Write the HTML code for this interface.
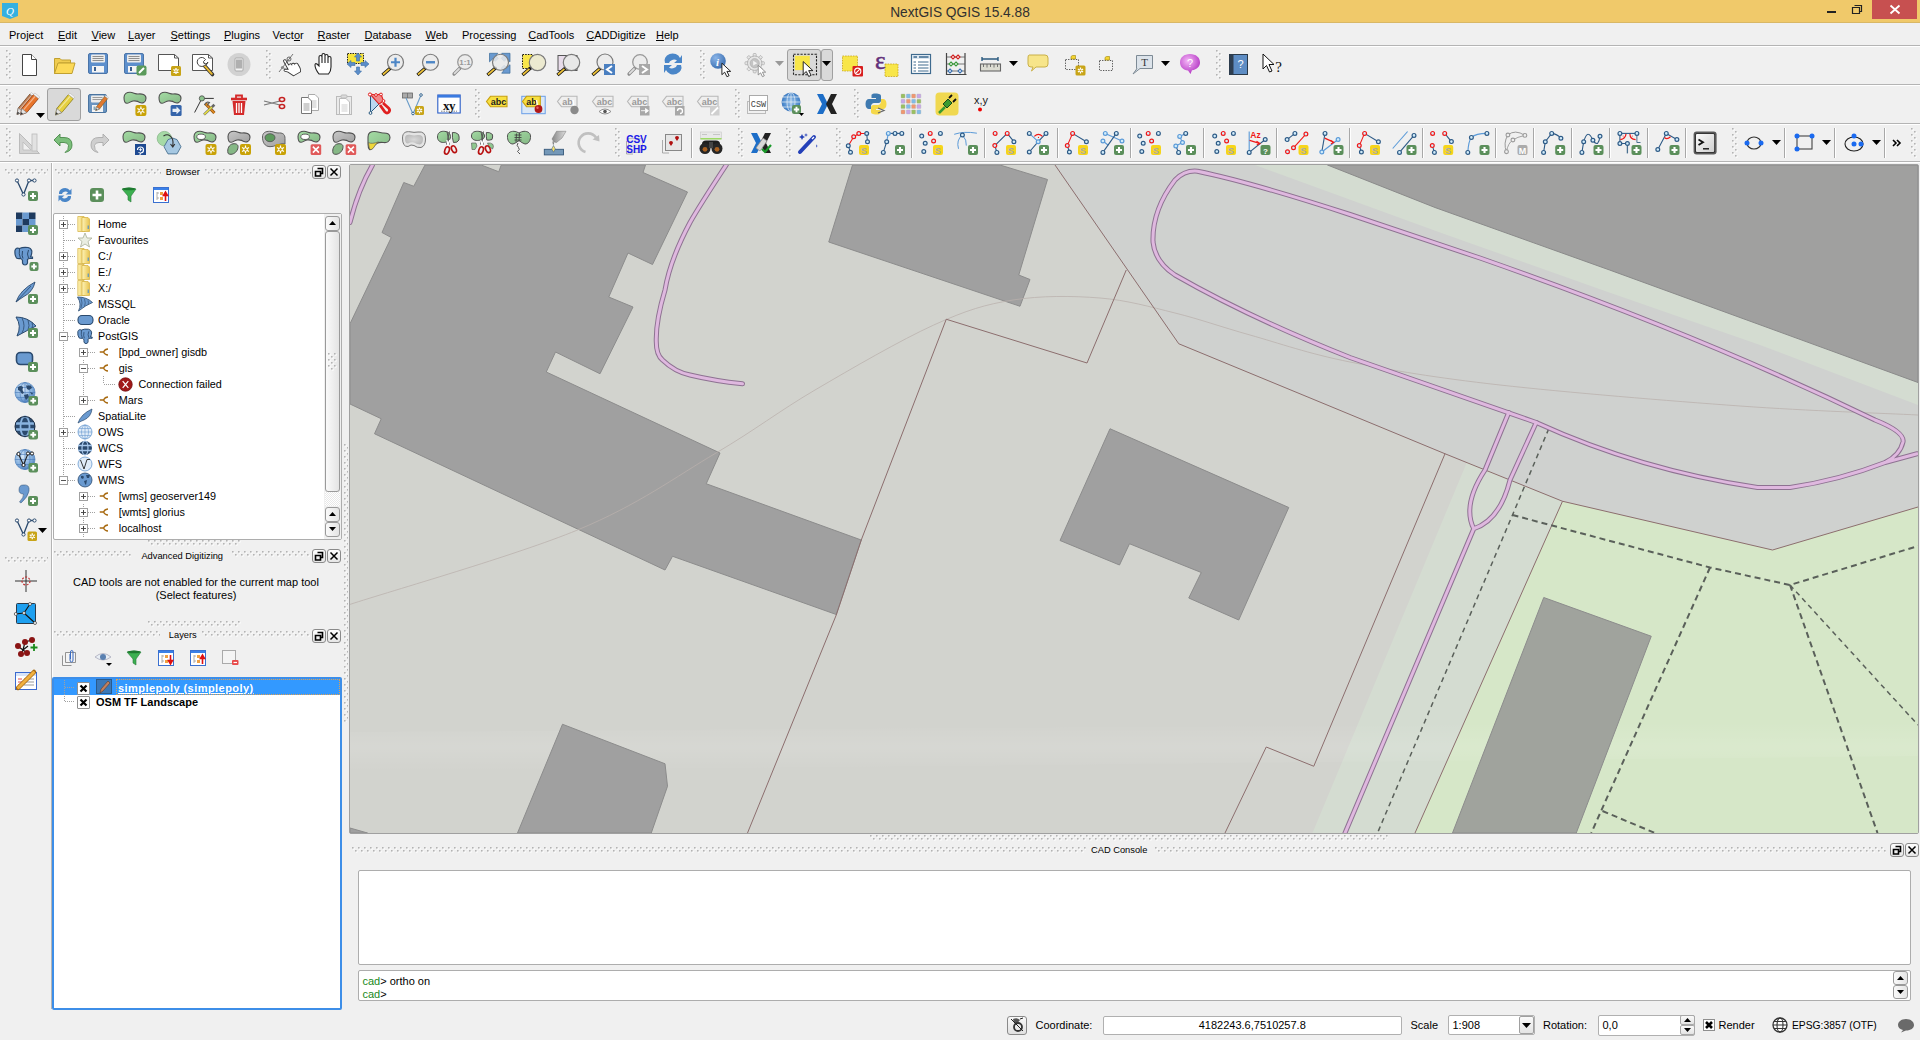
<!DOCTYPE html>
<html><head><meta charset="utf-8"><title>NextGIS QGIS</title>
<style>
*{margin:0;padding:0;box-sizing:border-box}
html,body{width:1920px;height:1040px;overflow:hidden;background:#f0f0f0;font-family:"Liberation Sans",sans-serif;font-size:12px;color:#000;position:relative}
.a{position:absolute}
.t{position:absolute;white-space:nowrap;line-height:1}
.hl{position:absolute;height:1px;background:#a0a0a0}
.vl{position:absolute;width:1px;background:#a0a0a0}
.box{position:absolute;background:#fff;border:1px solid #abadb3}
.dbtn{position:absolute;width:14px;height:14px;border:1px solid #8a8a8a;border-radius:3px;background:linear-gradient(#fdfdfd,#e6e6e6)}
u{text-decoration:underline}
svg{overflow:visible}

</style></head><body>
<div class="a" style="left:349px;top:164px;width:1570px;height:670px;border:1px solid #a0a0a0;border-radius:2px;background:#d2d3ce"></div>

<svg class="map" style="position:absolute;left:350px;top:165px;overflow:hidden" width="1568" height="668" viewBox="350 165 1568 668">
<rect x="350" y="165" width="1568" height="668" fill="#d2d3ce"/>
<!-- cool grey region -->
<polygon points="1055,165 1178.75,343.75 1315,400 1445,453.75 1562.5,501.25 1772.5,550 1918,507 1918,165" fill="#cfd1cf"/>
<!-- pale green strip -->
<polygon points="1467,462 1562.5,501.25 1415,833 1312.5,833" fill="#d4dcd1"/>
<!-- bright green -->
<polygon points="1562.5,501.25 1772.5,550 1918,507 1918,833 1415,833" fill="#d6e7c8"/>
<!-- green band -->
<path d="M1255,165 L1440,232.5 L1600,289.2 L1760,345 L1918,405 L1918,165 Z" fill="#d4dcd1"/>
<!-- top-right building -->
<path d="M1327.5,165 L1435,207.5 L1609.6,270 L1760,324.8 L1918,382.5 L1918,165 Z" fill="#a0a09f" stroke="#8a8a8a" stroke-width="1"/>

<defs><linearGradient id="hb" x1="0" y1="0" x2="0" y2="1"><stop offset="0" stop-color="#fff" stop-opacity="0"/><stop offset=".5" stop-color="#fff" stop-opacity=".10"/><stop offset="1" stop-color="#fff" stop-opacity="0"/></linearGradient></defs><path d="M350,732 L1918,722 L1918,756 L350,772 Z" fill="url(#hb)"/>
<!-- buildings -->
<g fill="#a0a0a0" stroke="#8c8c8c" stroke-width="1">
<polygon points="425,165 481.25,165 498.75,171.75 501.25,165 645.5,165 643,172.5 687.5,192 652.5,264.5 628,253 608.75,297 633,307 600,373.75 555.5,352 546.25,372 720,453 706.25,483.75 861.25,540 836.25,614.5 672.5,556.25 665,570 374.5,433.75 381.25,418.75 350,404 350,323.75 391.25,237.5 382,232.5 403.75,182.5 413.75,186.25"/>
<polygon points="852.5,165 1000,165 1047.5,179.5 1018.75,275 1030,279.5 1020,306.25 828.75,242"/>
<polygon points="1110,428.75 1288.75,507.5 1238.75,620 1188.75,598 1201.25,572.5 1129.5,543.75 1119.5,565 1060,540.5"/>
<polygon points="562.5,724.25 665,763.75 667.5,786.25 651.25,833 517.5,833"/>
<polygon points="350,828 367.5,833 350,833"/>
<polygon points="1543.75,597.5 1651.25,636.25 1576.25,833 1452.5,833" fill="#a0a39d"/>
</g>
<!-- faint arc --><path d="M350,604.4 C391.2,590.9 516.5,555.2 577.5,530 C638.5,504.8 676.4,476.3 716,453 C755.6,429.7 778.7,411.3 815,390 C851.3,368.7 900.8,340.0 933.75,325 C966.8,310.0 985.3,304.5 1013,300 C1040.7,295.5 1073.0,295.8 1100,298 C1127.0,300.2 1150.0,306.8 1175,313 C1200.0,319.2 1220.8,326.8 1250,335 C1279.2,343.2 1308.3,353.7 1350,362 C1391.7,370.3 1435.0,377.7 1500,385 C1565.0,392.3 1670.3,401.0 1740,406 C1809.7,411.0 1884.7,413.3 1918,415" fill="none" stroke="#b9b0ac" stroke-width="1" opacity=".75"/>
<!-- brown parcel lines -->
<g fill="none" stroke="#8c6e6e" stroke-width="1">
<polyline points="1055,165 1178.75,343.75 1315,400 1445,453.75 1562.5,501.25 1772.5,550 1918,507"/>
<polyline points="1126.25,270 1087,363 946.25,319.25 861.25,540 836.25,615 747.5,833"/>
<polyline points="1445,453.75 1313.75,766.25 1266.25,747 1225,833"/>
<polyline points="1562.5,501.25 1415,833"/>
</g>
<!-- dashed -->
<g fill="none" stroke="#5a605a" stroke-width="2" stroke-dasharray="6,4">
<polyline points="1548.75,428.75 1512.5,515 1377.5,833" stroke-width="1.5" stroke-dasharray="5,4"/>
<polyline points="1512.5,515 1710,567.5 1790,585 1918,546"/>
<polyline points="1710,567.5 1591.25,833"/>
<polyline points="1602.5,811 1655,833"/>
<polyline points="1790,585 1877.5,833"/>
<polyline points="1790,585 1918,725" stroke-width="1.5" stroke-dasharray="5,4"/>
</g>
<!-- pink roads -->
<g fill="none" stroke-linecap="round" stroke-linejoin="round">
<g stroke="#8e7292" stroke-width="5">
<path id="r1" d="M1917,453.75 L1885,462.5 Q1840,480 1790,487.5 L1757.5,487.5 Q1640,470 1536.25,422.5 L1350,357.5 Q1250,318 1175,275 Q1155,262 1153,242 Q1152,210 1175,180 Q1185,170 1197.5,171.25 Q1250,182 1350,214.5 L1480,258 Q1700,335 1875,420 Q1905,432 1903,442 Q1900,455 1885,462.5"/>
<path id="r2" d="M1508.75,412.5 L1485,470 Q1462,505 1473.75,528.75 L1345,833 M1536.25,422.5 L1510,480 Q1500,520 1473.75,528.75"/>
<path id="r3" d="M350,222.5 Q358,190 372.5,165"/>
<path id="r4" d="M726.25,165 Q700,205 690,222.5 Q670,260 665,290 Q656,320 656.25,340 Q656,355 662.5,360 Q675,372 690,375 Q715,381 742.5,383.75"/>
</g>
<g stroke="#dfb8df" stroke-width="3">
<use href="#r1"/><use href="#r2"/><use href="#r3"/><use href="#r4"/>
</g>
</g>
</svg>

<svg class="a" width="0" height="0" style="left:0;top:0"><defs><pattern id="grip" width="6" height="6" patternUnits="userSpaceOnUse"><rect x="1" y="1" width="1.6" height="1.6" fill="#fff"/><rect x="0" y="0" width="1.6" height="1.6" fill="#b4b4b4"/><rect x="4" y="4" width="1.6" height="1.6" fill="#fff"/><rect x="3" y="3" width="1.6" height="1.6" fill="#b4b4b4"/></pattern></defs></svg>
<div class="a" style="left:0;top:0;width:1920px;height:23px;background:#f0c96a"></div>
<div class="a" style="left:0;top:22px;width:1920px;height:1px;background:#d9b866"></div>
<svg class="a" style="left:2px;top:3px" width="16" height="16" viewBox="0 0 16 16"><path d="M0 0H16V13L8 16L0 13Z" fill="#35b0e0"/><text x="8" y="12" font-size="11" font-style="italic" text-anchor="middle" fill="#fff" font-family="Liberation Serif">Q</text></svg>
<div class="t" style="left:0;width:1920px;text-align:center;top:4px;font-size:15px;color:#303030;transform:scaleX(0.915)">NextGIS QGIS 15.4.88</div>
<div class="a" style="left:1827px;top:11px;width:9px;height:2px;background:#222"></div>
<svg class="a" style="left:1851px;top:3px" width="12" height="12"><path d="M3.5 2.5h7v6h-2M1.5 4.5h7v6h-7z" fill="none" stroke="#222" stroke-width="1.2"/></svg>
<div class="a" style="left:1872px;top:0;width:45px;height:19px;background:#c75050"></div>
<svg class="a" style="left:1889px;top:4px" width="12" height="11"><path d="M1.5 1.5l9 8M10.5 1.5l-9 8" stroke="#fff" stroke-width="1.8"/></svg>
<div class="t" style="left:9px;top:29.5px;font-size:11px;">Pro<u>j</u>ect</div>
<div class="t" style="left:58px;top:29.5px;font-size:11px;"><u>E</u>dit</div>
<div class="t" style="left:91.5px;top:29.5px;font-size:11px;"><u>V</u>iew</div>
<div class="t" style="left:128px;top:29.5px;font-size:11px;"><u>L</u>ayer</div>
<div class="t" style="left:170.5px;top:29.5px;font-size:11px;"><u>S</u>ettings</div>
<div class="t" style="left:224px;top:29.5px;font-size:11px;"><u>P</u>lugins</div>
<div class="t" style="left:272.5px;top:29.5px;font-size:11px;">Vect<u>o</u>r</div>
<div class="t" style="left:317.5px;top:29.5px;font-size:11px;"><u>R</u>aster</div>
<div class="t" style="left:364.5px;top:29.5px;font-size:11px;"><u>D</u>atabase</div>
<div class="t" style="left:425.5px;top:29.5px;font-size:11px;"><u>W</u>eb</div>
<div class="t" style="left:462px;top:29.5px;font-size:11px;">Pro<u>c</u>essing</div>
<div class="t" style="left:528.3px;top:29.5px;font-size:11px;"><u>C</u>adTools</div>
<div class="t" style="left:586.3px;top:29.5px;font-size:11px;"><u>C</u>ADDigitize</div>
<div class="t" style="left:656px;top:29.5px;font-size:11px;"><u>H</u>elp</div>
<div class="a" style="left:0;top:45px;width:1920px;height:1px;background:#b4b4b4"></div><div class="a" style="left:0;top:46px;width:1920px;height:1px;background:#fff"></div>
<div class="a" style="left:0;top:84px;width:1920px;height:1px;background:#b4b4b4"></div><div class="a" style="left:0;top:85px;width:1920px;height:1px;background:#fff"></div>
<div class="a" style="left:0;top:123px;width:1920px;height:1px;background:#b4b4b4"></div><div class="a" style="left:0;top:124px;width:1920px;height:1px;background:#fff"></div>
<div class="a" style="left:0;top:161px;width:1920px;height:1px;background:#b4b4b4"></div><div class="a" style="left:0;top:162px;width:1920px;height:1px;background:#fff"></div>
<div class="a" style="left:787px;top:49px;width:34px;height:32px;background:#d9d9d9;border:1px solid #a0a0a0;border-radius:3px"></div>
<div class="a" style="left:821px;top:49px;width:12px;height:32px;background:#d9d9d9;border:1px solid #a0a0a0;border-radius:3px"></div>
<div class="a" style="left:47px;top:88px;width:34px;height:33px;background:#d9d9d9;border:1px solid #a0a0a0;border-radius:3px"></div>
<svg class="a" style="left:6px;top:50px" width="6" height="30"><rect width="6" height="30" fill="url(#grip)"/></svg>
<svg class="a" style="left:266px;top:50px" width="6" height="30"><rect width="6" height="30" fill="url(#grip)"/></svg>
<svg class="a" style="left:700px;top:50px" width="6" height="30"><rect width="6" height="30" fill="url(#grip)"/></svg>
<svg class="a" style="left:1216px;top:50px" width="6" height="30"><rect width="6" height="30" fill="url(#grip)"/></svg>
<svg class="a" style="left:6px;top:89px" width="6" height="30"><rect width="6" height="30" fill="url(#grip)"/></svg>
<svg class="a" style="left:475px;top:89px" width="6" height="30"><rect width="6" height="30" fill="url(#grip)"/></svg>
<svg class="a" style="left:735px;top:89px" width="6" height="30"><rect width="6" height="30" fill="url(#grip)"/></svg>
<svg class="a" style="left:854px;top:89px" width="6" height="30"><rect width="6" height="30" fill="url(#grip)"/></svg>
<svg class="a" style="left:6px;top:128px" width="6" height="30"><rect width="6" height="30" fill="url(#grip)"/></svg>
<svg class="a" style="left:615px;top:128px" width="6" height="30"><rect width="6" height="30" fill="url(#grip)"/></svg>
<svg class="a" style="left:738px;top:128px" width="6" height="30"><rect width="6" height="30" fill="url(#grip)"/></svg>
<svg class="a" style="left:786px;top:128px" width="6" height="30"><rect width="6" height="30" fill="url(#grip)"/></svg>
<svg class="a" style="left:836px;top:128px" width="6" height="30"><rect width="6" height="30" fill="url(#grip)"/></svg>
<svg class="a" style="left:1732px;top:128px" width="6" height="30"><rect width="6" height="30" fill="url(#grip)"/></svg>
<svg class="a" style="left:1911px;top:128px" width="6" height="30"><rect width="6" height="30" fill="url(#grip)"/></svg>
<svg class="a" style="left:17.0px;top:52.0px" width="24.0" height="24.0" viewBox="0 0 24 24"><path d="M5.5 2.5H14.5L19.5 7.5V23.5H5.5Z" fill="#fff" stroke="#444" stroke-width="1"/><path d="M14.5 2.5V7.5H19.5" fill="#fff" stroke="#444"/></svg>
<svg class="a" style="left:52.0px;top:52.0px" width="24.0" height="24.0" viewBox="0 0 24 24"><path d="M2.5 6.5H8L9.5 8H18.5V11H7L4 21.5H2.5Z" fill="#f0cc50" stroke="#c0a030"/><path d="M6 11H23L20 21.5H2.5Z" fill="#fcd957" stroke="#c0a030"/></svg>
<svg class="a" style="left:87.0px;top:52.0px" width="24.0" height="24.0" viewBox="0 0 24 24"><rect x="1.5" y="1.5" width="19" height="20" rx="1.5" fill="#5d8fcc" stroke="#4a74a8"/><rect x="4" y="2.5" width="14" height="8" rx="1" fill="#ececec"/><path d="M5.5 4.5H16.5M5.5 6.5H16.5M5.5 8.5H16.5" stroke="#777" stroke-width=".8"/><rect x="5" y="14" width="12" height="6.5" fill="#f4f4f4"/><rect x="7" y="15" width="2" height="4" fill="#3b5f8f"/></svg>
<svg class="a" style="left:122.5px;top:52.0px" width="24.0" height="24.0" viewBox="0 0 24 24"><rect x="1.5" y="1.5" width="19" height="20" rx="1.5" fill="#5d8fcc" stroke="#4a74a8"/><rect x="4" y="2.5" width="14" height="8" rx="1" fill="#ececec"/><path d="M5.5 4.5H16.5M5.5 6.5H16.5M5.5 8.5H16.5" stroke="#777" stroke-width=".8"/><rect x="5" y="14" width="12" height="6.5" fill="#f4f4f4"/><rect x="7" y="15" width="2" height="4" fill="#3b5f8f"/><rect x="13.5" y="13.5" width="10" height="10" rx="2" fill="#5b9a5b"/><path d="M16 21L21 16" stroke="#fff" stroke-width="2"/></svg>
<svg class="a" style="left:156.5px;top:52.0px" width="24.0" height="24.0" viewBox="0 0 24 24"><path d="M1.5 2.5H17.5L21.5 6V18.5H1.5Z" fill="#fff" stroke="#555"/><path d="M17.5 2.5V6H21.5" fill="none" stroke="#555"/><rect x="14" y="14" width="10" height="10" rx="1.5" fill="#c8a417"/><path d="M19.0 16.0V22.0M16.4 17.5L21.6 20.5M16.4 20.5L21.6 17.5" stroke="#fff" stroke-width="1.3"/><circle cx="19.0" cy="19.0" r="1.3" fill="#c8a417" stroke="#fff" stroke-width=".8"/></svg>
<svg class="a" style="left:191.0px;top:52.0px" width="24.0" height="24.0" viewBox="0 0 24 24"><path d="M1.5 2.5H17.5L21.5 6V18.5H1.5Z" fill="#fff" stroke="#555"/><path d="M17.5 2.5V6H21.5" fill="none" stroke="#555"/><path d="M12 12L21.5 22.5" stroke="#333" stroke-width="3.6" stroke-linecap="round"/><path d="M12.8 12.8L20.8 21.8" stroke="#e8b830" stroke-width="2" stroke-linecap="round"/><path d="M13.5 13.5A4.5 4.5 0 1 1 14.5 7.5L12.5 9.5L13 11.5L15 12L17 10A4.5 4.5 0 0 1 13.5 13.5Z" fill="#fff" stroke="#444" stroke-width="1"/></svg>
<svg class="a" style="left:226.5px;top:52.0px" width="24.0" height="24.0" viewBox="0 0 24 24"><circle cx="12" cy="12.5" r="11.5" fill="#d2d2d2"/><rect x="8" y="6" width="8" height="13" rx="1" fill="#f4f4f4" stroke="#aaa"/><rect x="9" y="7.5" width="6" height="9" fill="#b0b0b0"/></svg>
<svg class="a" style="left:277.5px;top:52.0px" width="24.0" height="24.0" viewBox="0 0 24 24"><path d="M7.5 23L4.5 17L2 14.5Q1.5 13 3 12.5L6 14.5V6Q6 4.5 7.3 4.5Q8.6 4.5 8.6 6V11.5Q9 10.5 10.3 10.8Q11.5 11 11.5 12.3Q12 11.5 13.2 11.8Q14.3 12.2 14.3 13.5Q15 13 16 13.3Q17 13.7 17 15V19Q17 21 15.5 23Z" fill="#fff" stroke="#333" stroke-width=".9" transform="translate(2,0) rotate(-30 12 12)"/><path d="M1 20L15 2" stroke="#555" stroke-width=".8"/><circle cx="11" cy="7" r="2" fill="none" stroke="#555" stroke-width=".9"/><circle cx="4.5" cy="15.5" r="1.6" fill="#888"/></svg>
<svg class="a" style="left:311.5px;top:52.0px" width="24.0" height="24.0" viewBox="0 0 24 24"><path d="M7 22Q3 17 3 13Q3 11 5 12L7 14V5Q7 3.5 8.5 3.5Q10 3.5 10 5V11V3Q10 1.5 11.5 1.5Q13 1.5 13 3V11V4Q13 2.5 14.5 2.5Q16 2.5 16 4V11V6Q16 4.5 17.5 4.5Q19 4.5 19 6V15Q19 19 16.5 22Z" fill="#fff" stroke="#222" stroke-width="1.1"/></svg>
<svg class="a" style="left:345.5px;top:52.0px" width="24.0" height="24.0" viewBox="0 0 24 24"><rect x="1.5" y="1.5" width="16" height="10" fill="#f7e43a" stroke="#222" stroke-width="1" stroke-dasharray="1.5,1"/><path d="M12 1L15.5 5H13.5V9H10.5V5H8.5Z M12 23L15.5 19H13.5V15H10.5V19H8.5Z M1 12L5 8.5V10.5H9V13.5H5V15.5Z M23 12L19 8.5V10.5H15V13.5H19V15.5Z" fill="#5b8dc9" stroke="#3d6ea8" stroke-width=".6"/></svg>
<svg class="a" style="left:380.5px;top:52.0px" width="24.0" height="24.0" viewBox="0 0 24 24"><path d="M1.5 23L9.5 16" stroke="#111" stroke-width="3.4" stroke-linecap="butt"/><path d="M2 22.5L8.8 16.6" stroke="#f0c43a" stroke-width="1.8"/><circle cx="9.6" cy="16" r="1.5" fill="#111"/><circle cx="14.5" cy="10.25" r="8.0" fill="#ececec" stroke="#7a7a7a" stroke-width="1.2"/><path d="M10 10.25H19M14.5 5.75V14.75" stroke="#4d86c6" stroke-width="2.2"/></svg>
<svg class="a" style="left:415.5px;top:52.0px" width="24.0" height="24.0" viewBox="0 0 24 24"><path d="M1.5 23L9.5 16" stroke="#111" stroke-width="3.4" stroke-linecap="butt"/><path d="M2 22.5L8.8 16.6" stroke="#f0c43a" stroke-width="1.8"/><circle cx="9.6" cy="16" r="1.5" fill="#111"/><circle cx="14.5" cy="10.25" r="8.0" fill="#ececec" stroke="#7a7a7a" stroke-width="1.2"/><path d="M10 10.25H19" stroke="#4d86c6" stroke-width="2.4"/></svg>
<svg class="a" style="left:450.5px;top:52.0px" width="24.0" height="24.0" viewBox="0 0 24 24"><path d="M3 22L9 16" stroke="#888" stroke-width="3.2" stroke-linecap="round"/><path d="M3.6 21.4L8 17" stroke="#ddd" stroke-width="1.8" stroke-linecap="round"/><circle cx="14" cy="10" r="7.3" fill="#ececec" stroke="#999" stroke-width="1.3"/><text x="14" y="13" font-size="8" font-weight="bold" text-anchor="middle" fill="#999" font-family="Liberation Sans">1:1</text></svg>
<svg class="a" style="left:486.0px;top:52.0px" width="24.0" height="24.0" viewBox="0 0 24 24"><path d="M3.5 1.3H11.8L9.8 3.8L12.3 6.3L9.3 9.3L6.8 6.8L3.5 9.8Z M24 1.3H15.7L17.7 3.8L15.2 6.3L18.2 9.3L20.7 6.8L24 9.8Z M24 21.2H15.7L17.7 18.7L15.2 16.2L18.2 13.2L20.7 15.7L24 12.7Z" fill="#6a9ad0" stroke="#3a6a9a" stroke-width=".7"/><path d="M1.5 23L9.5 16" stroke="#111" stroke-width="3.4"/><path d="M2 22.5L8.8 16.6" stroke="#f0c43a" stroke-width="1.8"/><circle cx="9.6" cy="16" r="1.5" fill="#111"/><circle cx="14.5" cy="10.25" r="8" fill="#eaeaea" fill-opacity=".85" stroke="#7a7a7a" stroke-width="1.2"/><path d="M3.5 1.3H11.8L9.8 3.8L12.3 6.3L9.3 9.3L6.8 6.8L3.5 9.8Z M24 1.3H15.7L17.7 3.8L15.2 6.3L18.2 9.3L20.7 6.8L24 9.8Z M24 21.2H15.7L17.7 18.7L15.2 16.2L18.2 13.2L20.7 15.7L24 12.7Z" fill="#6a9ad0" fill-opacity=".0"/></svg>
<svg class="a" style="left:521.0px;top:52.0px" width="24.0" height="24.0" viewBox="0 0 24 24"><rect x="1.5" y="2.5" width="10" height="14" fill="#f8e64a" stroke="#111" stroke-width="1" stroke-dasharray="1.5,1.2"/><path d="M1.5 23L9.5 16" stroke="#111" stroke-width="3.4" stroke-linecap="butt"/><path d="M2 22.5L8.8 16.6" stroke="#f0c43a" stroke-width="1.8"/><circle cx="9.6" cy="16" r="1.5" fill="#111"/><circle cx="16.5" cy="10.5" r="8.2" fill="#ecead0" stroke="#7a7a7a" stroke-width="1.2"/></svg>
<svg class="a" style="left:556.0px;top:52.0px" width="24.0" height="24.0" viewBox="0 0 24 24"><rect x="2" y="3.5" width="19" height="15" fill="#e8dcea" stroke="#555" stroke-width="1"/><path d="M1.5 23L9.5 16" stroke="#111" stroke-width="3.4" stroke-linecap="butt"/><path d="M2 22.5L8.8 16.6" stroke="#f0c43a" stroke-width="1.8"/><circle cx="9.6" cy="16" r="1.5" fill="#111"/><circle cx="15.5" cy="10.5" r="8.2" fill="#e8e8e8" stroke="#7a7a7a" stroke-width="1.2"/></svg>
<svg class="a" style="left:591.0px;top:52.0px" width="24.0" height="24.0" viewBox="0 0 24 24"><path d="M1.5 23L9.5 16" stroke="#111" stroke-width="3.4" stroke-linecap="butt"/><path d="M2 22.5L8.8 16.6" stroke="#f0c43a" stroke-width="1.8"/><circle cx="9.6" cy="16" r="1.5" fill="#111"/><circle cx="14" cy="10" r="8.0" fill="#ececec" stroke="#7a7a7a" stroke-width="1.2"/><rect x="13" y="12" width="11" height="11" fill="#4a7fc0"/><path d="M21 14L16 17.5L21 21" stroke="#fff" stroke-width="2" fill="none"/></svg>
<svg class="a" style="left:626.0px;top:52.0px" width="24.0" height="24.0" viewBox="0 0 24 24"><path d="M3 22L9 16" stroke="#888" stroke-width="3.2" stroke-linecap="round"/><path d="M3.6 21.4L8 17" stroke="#ddd" stroke-width="1.8" stroke-linecap="round"/><circle cx="14" cy="10" r="7.3" fill="#ececec" stroke="#999" stroke-width="1.3"/><rect x="13" y="12" width="11" height="11" fill="#a8a8a8"/><path d="M16 14L21 17.5L16 21" stroke="#fff" stroke-width="2" fill="none"/></svg>
<svg class="a" style="left:661.0px;top:52.0px" width="24.0" height="24.0" viewBox="0 0 24 24"><path d="M4 11A8 7 0 0 1 19 6L21 3V11H13L16 8.5A5 4 0 0 0 8 11Z" fill="#4a86c8"/><path d="M20 13A8 7 0 0 1 5 18L3 21V13H11L8 15.5A5 4 0 0 0 16 13Z" fill="#4a86c8"/></svg>
<svg class="a" style="left:710.0px;top:52.0px" width="24.0" height="24.0" viewBox="0 0 24 24"><defs><radialGradient id="gi" cx=".35" cy=".3" r=".75"><stop offset="0" stop-color="#8ab4e8"/><stop offset="1" stop-color="#3a6eb0"/></radialGradient></defs><circle cx="8" cy="9" r="7.8" fill="url(#gi)"/><text x="7.5" y="13.5" font-size="11" font-style="italic" font-weight="bold" text-anchor="middle" fill="#fff" font-family="Liberation Serif">i</text><path transform="translate(11.9,11.2) scale(1.0)" d="M0 0L0 11.5L2.8 9L5 13.5L7.2 12.5L5 8.2H8.8Z" fill="#fff" stroke="#111" stroke-width="0.90" stroke-linejoin="round"/></svg>
<svg class="a" style="left:743.0px;top:52.0px" width="24.0" height="24.0" viewBox="0 0 24 24"><rect x="10.2" y="1.5" width="3" height="3.5" rx=".8" fill="#e6e6e6" stroke="#aaa" stroke-width=".7" transform="rotate(0 11.7 11.2)"/><rect x="10.2" y="1.5" width="3" height="3.5" rx=".8" fill="#e6e6e6" stroke="#aaa" stroke-width=".7" transform="rotate(45 11.7 11.2)"/><rect x="10.2" y="1.5" width="3" height="3.5" rx=".8" fill="#e6e6e6" stroke="#aaa" stroke-width=".7" transform="rotate(90 11.7 11.2)"/><rect x="10.2" y="1.5" width="3" height="3.5" rx=".8" fill="#e6e6e6" stroke="#aaa" stroke-width=".7" transform="rotate(135 11.7 11.2)"/><rect x="10.2" y="1.5" width="3" height="3.5" rx=".8" fill="#e6e6e6" stroke="#aaa" stroke-width=".7" transform="rotate(180 11.7 11.2)"/><rect x="10.2" y="1.5" width="3" height="3.5" rx=".8" fill="#e6e6e6" stroke="#aaa" stroke-width=".7" transform="rotate(225 11.7 11.2)"/><rect x="10.2" y="1.5" width="3" height="3.5" rx=".8" fill="#e6e6e6" stroke="#aaa" stroke-width=".7" transform="rotate(270 11.7 11.2)"/><rect x="10.2" y="1.5" width="3" height="3.5" rx=".8" fill="#e6e6e6" stroke="#aaa" stroke-width=".7" transform="rotate(315 11.7 11.2)"/><circle cx="11.7" cy="11.2" r="7.2" fill="#e6e6e6" stroke="#aaa" stroke-width=".8"/><circle cx="11.7" cy="11.2" r="4.6" fill="#c4c4c4" stroke="#aaa" stroke-width=".6"/><path d="M10.2 8.8L14.2 11.2L10.2 13.6Z" fill="#f4f4f4"/><path transform="translate(15.2,13.2) scale(0.85)" d="M0 0L0 11.5L2.8 9L5 13.5L7.2 12.5L5 8.2H8.8Z" fill="#fff" stroke="#888" stroke-width="1.06" stroke-linejoin="round"/></svg>
<svg class="a" style="left:792.0px;top:52.0px" width="24.0" height="24.0" viewBox="0 0 24 24"><rect x="1.5" y="2.3" width="23" height="20.5" fill="none" stroke="#222" stroke-width="1.1" stroke-dasharray="2.2,1.3"/><rect x="2.8" y="3.8" width="15" height="14.3" fill="#f8e64a"/><path transform="translate(11.2,9.6) scale(1.1)" d="M0 0L0 11.5L2.8 9L5 13.5L7.2 12.5L5 8.2H8.8Z" fill="#fff" stroke="#111" stroke-width="0.82" stroke-linejoin="round"/></svg>
<svg class="a" style="left:840.5px;top:52.0px" width="24.0" height="24.0" viewBox="0 0 24 24"><rect x="1.5" y="4" width="15" height="15" fill="#f8e64a" stroke="#c8a418" stroke-width=".8" stroke-dasharray="1.6,1"/><rect x="11.5" y="14" width="10.5" height="10.5" rx="1" fill="#d81e1e"/><circle cx="16.75" cy="19.25" r="3.1" fill="none" stroke="#fff" stroke-width="1.1"/><path d="M14.7 21.3L18.8 17.2" stroke="#fff" stroke-width="1.1"/></svg>
<svg class="a" style="left:875.0px;top:52.0px" width="24.0" height="24.0" viewBox="0 0 24 24"><rect x="10" y="12" width="13" height="12.5" fill="#f8e64a" stroke="#c8a418" stroke-width=".8" stroke-dasharray="1.6,1"/><text x="0" y="16.8" font-size="25" fill="#62307a" stroke="#62307a" stroke-width=".5" font-family="Liberation Serif">ε</text></svg>
<svg class="a" style="left:908.5px;top:52.0px" width="24.0" height="24.0" viewBox="0 0 24 24"><rect x="2.5" y="2.5" width="19" height="19" fill="#fff" stroke="#3e6a8e" stroke-width="1.2"/><rect x="3" y="3" width="18" height="4" fill="#dbe6f0"/><path d="M4.5 5H8M10 5H19.5" stroke="#3e6a8e" stroke-width="1.3"/><path d="M4.5 10H7M9 10H19.5M4.5 13H7M9 13H19.5M4.5 16H7M9 16H19.5M4.5 19H7M9 19H19.5" stroke="#3e6a8e" stroke-width="1"/></svg>
<svg class="a" style="left:944.0px;top:52.0px" width="24.0" height="24.0" viewBox="0 0 24 24"><path d="M2.5 1V22.5H22.5M21 1V22" stroke="#444" stroke-width="1.2" fill="none"/><path d="M2.5 5H21M2.5 12H21M2.5 19H21" stroke="#555" stroke-width=".8"/><path d="M9 3L11 5L9 7L7 5Z M14 3L16 5L14 7L12 5Z" fill="#fff" stroke="#d02020" stroke-width="1.1"/><path d="M7 10L9 12L7 14L5 12Z M12 10L14 12L12 14L10 12Z" fill="#fff" stroke="#3a9a3a" stroke-width="1.1"/><path d="M6 17L8 19L6 21L4 19Z M16 17L18 19L16 21L14 19Z" fill="#fff" stroke="#3a70b0" stroke-width="1.1"/></svg>
<svg class="a" style="left:979.0px;top:52.0px" width="24.0" height="24.0" viewBox="0 0 24 24"><path d="M3 5V9M3 7H19M19 5V9" stroke="#2b5a7f" stroke-width="1.4"/><rect x="1.5" y="12" width="20" height="7" fill="#dcdcd2" stroke="#666" stroke-width="1.1"/><path d="M4.5 12V15M8 12V15.5M11.5 12V15M15 12V15.5M18.5 12V15" stroke="#666" stroke-width=".9"/></svg>
<svg class="a" style="left:1025.5px;top:52.0px" width="24.0" height="24.0" viewBox="0 0 24 24"><path d="M3 3H19Q22 3 22 6V12Q22 15 19 15H10L5.5 19L7 15H5Q2 15 2 12V6Q2 3 3 3Z" fill="#f7e58a" stroke="#c9b048"/></svg>
<svg class="a" style="left:1063.0px;top:52.0px" width="24.0" height="24.0" viewBox="0 0 24 24"><rect x="2.5" y="7.5" width="13" height="10" fill="none" stroke="#444" stroke-width=".9" stroke-dasharray="1.3,1.3"/><path d="M8 7V4.5L9.5 3.5H12.5V7Z" fill="#f5d530" stroke="#a8901a" stroke-width=".7"/><rect x="12.5" y="13.5" width="10" height="10" rx="1.5" fill="#c8a417"/><path d="M17.5 15.5V21.5M14.9 17.0L20.1 20.0M14.9 20.0L20.1 17.0" stroke="#fff" stroke-width="1.3"/><circle cx="17.5" cy="18.5" r="1.3" fill="#c8a417" stroke="#fff" stroke-width=".8"/></svg>
<svg class="a" style="left:1095.0px;top:52.0px" width="24.0" height="24.0" viewBox="0 0 24 24"><rect x="4.5" y="8.5" width="13" height="10" fill="none" stroke="#444" stroke-width=".9" stroke-dasharray="1.3,1.3"/><path d="M10 8V5.5L11.5 4.5H14.5V8Z" fill="#f5d530" stroke="#a8901a" stroke-width=".7"/></svg>
<svg class="a" style="left:1131.0px;top:52.0px" width="24.0" height="24.0" viewBox="0 0 24 24"><path d="M5.5 3.5H21.5V16.5H9L2 22L6 16.5H5.5Z" fill="#dce3ea" stroke="#7d8a95"/><text x="13.5" y="14" font-size="11" text-anchor="middle" fill="#333" font-family="Liberation Serif">T</text></svg>
<svg class="a" style="left:1178.0px;top:52.0px" width="24.0" height="24.0" viewBox="0 0 24 24"><defs><radialGradient id="gp" cx=".4" cy=".35" r=".7"><stop offset="0" stop-color="#f5b8f8"/><stop offset="1" stop-color="#b02fc0"/></radialGradient></defs><path d="M12 2C6 2 2 5.5 2 10.5C2 15 5.5 18 10 18.5L12.5 22L14 18.3C19 17.5 22 14.5 22 10.5C22 5.5 18 2 12 2Z" fill="url(#gp)"/><text x="12" y="15" font-size="11" text-anchor="middle" fill="#fff" font-family="Liberation Sans">?</text></svg>
<svg class="a" style="left:1227.0px;top:52.0px" width="24.0" height="24.0" viewBox="0 0 24 24"><rect x="2.5" y="2.5" width="18" height="20" fill="#5e8dc4" stroke="#2a3a4a"/><rect x="2.5" y="2.5" width="4" height="20" fill="#2e3e50"/><text x="13.5" y="16" font-size="11" text-anchor="middle" fill="#fff" font-family="Liberation Sans">?</text></svg>
<svg class="a" style="left:1261.0px;top:52.0px" width="24.0" height="24.0" viewBox="0 0 24 24"><path d="M2 2V17L5.5 13.5L8.5 20L11 19L8 12.5H13Z" fill="#fff" stroke="#111" stroke-width="1"/><text x="17.5" y="20" font-size="15" text-anchor="middle" fill="#111" font-family="Liberation Serif">?</text></svg>
<svg class="a" style="left:775.0px;top:61.0px" width="9" height="5"><path d="M0 0h9l-4.5 5z" fill="#999"/></svg>
<svg class="a" style="left:822.0px;top:61.0px" width="9" height="5"><path d="M0 0h9l-4.5 5z" fill="#000"/></svg>
<svg class="a" style="left:1009.0px;top:61.0px" width="9" height="5"><path d="M0 0h9l-4.5 5z" fill="#000"/></svg>
<svg class="a" style="left:1161.0px;top:61.0px" width="9" height="5"><path d="M0 0h9l-4.5 5z" fill="#000"/></svg>
<svg class="a" style="left:17.0px;top:92.0px" width="24.0" height="24.0" viewBox="0 0 24 24"><g transform="translate(-3.5,-0.5)"><path d="M3.5 23L4.8 16.5L16.5 2.5L21.5 6.5L9.8 20.5Z" fill="#c08058" stroke="#6a4020" stroke-width=".8"/><path d="M6.5 17.8L18 4.5" stroke="#fff" stroke-opacity=".45" stroke-width="1.2"/><path d="M3.5 23L4.8 16.5L9.8 20.5Z" fill="#e4e4e4" stroke="#777" stroke-width=".6"/><path d="M3.5 23L4.1 20.2L6 21.6Z" fill="#333"/><path d="M16.5 2.5L21.5 6.5L22.8 5L17.8 1Z" fill="#f4f4f4" stroke="#bbb" stroke-width=".6"/></g><path d="M3.5 23L4.8 16.5L16.5 2.5L21.5 6.5L9.8 20.5Z" fill="#e8742a" stroke="#8a3a10" stroke-width=".8"/><path d="M6.5 17.8L18 4.5" stroke="#fff" stroke-opacity=".45" stroke-width="1.2"/><path d="M3.5 23L4.8 16.5L9.8 20.5Z" fill="#e4e4e4" stroke="#777" stroke-width=".6"/><path d="M3.5 23L4.1 20.2L6 21.6Z" fill="#333"/><path d="M16.5 2.5L21.5 6.5L22.8 5L17.8 1Z" fill="#f4f4f4" stroke="#bbb" stroke-width=".6"/></svg>
<svg class="a" style="left:52.0px;top:92.0px" width="24.0" height="24.0" viewBox="0 0 24 24"><path d="M3.5 23L4.8 16.5L16.5 2.5L21.5 6.5L9.8 20.5Z" fill="#e6d040" stroke="#8a7a18" stroke-width=".8"/><path d="M6.5 17.8L18 4.5" stroke="#fff" stroke-opacity=".45" stroke-width="1.2"/><path d="M3.5 23L4.8 16.5L9.8 20.5Z" fill="#e4e4e4" stroke="#777" stroke-width=".6"/><path d="M3.5 23L4.1 20.2L6 21.6Z" fill="#333"/><path d="M16.5 2.5L21.5 6.5L22.8 5L17.8 1Z" fill="#f4f4f4" stroke="#bbb" stroke-width=".6"/></svg>
<svg class="a" style="left:86.5px;top:92.0px" width="24.0" height="24.0" viewBox="0 0 24 24"><rect x="1.5" y="2.5" width="18" height="18" rx="1.5" fill="#6a94c0" stroke="#4a74a0"/><rect x="4" y="3.5" width="13" height="7" rx="1" fill="#ececec"/><path d="M5.5 5.5H15.5M5.5 7.5H15.5" stroke="#888" stroke-width=".8"/><rect x="5" y="13" width="11" height="7" fill="#f4f4f4"/><rect x="6.5" y="14.5" width="2" height="3.5" fill="#8ab"/><g transform="translate(5,2) scale(.75)"><g><path d="M5 22L6 17L17 3L21 6L10 20Z" fill="#e07830" stroke="#7a6020" stroke-width=".8"/><path d="M5 22L6 17L10 20Z" fill="#ddd" stroke="#666" stroke-width=".6"/><path d="M5 22L5.6 19.5L7.2 20.6Z" fill="#555"/><path d="M17 3L21 6L22 4.5L18.5 1.8Z" fill="#eee" stroke="#aaa" stroke-width=".5"/></g></g></svg>
<svg class="a" style="left:122.5px;top:92.0px" width="24.0" height="24.0" viewBox="0 0 24 24"><defs><linearGradient id="bgA" x1="0" y1="0" x2="1" y2="1"><stop offset="0" stop-color="#a4dca4"/><stop offset="1" stop-color="#86b886"/></linearGradient><linearGradient id="bgG" x1="0" y1="0" x2="1" y2="1"><stop offset="0" stop-color="#c8c8c8"/><stop offset="1" stop-color="#a0a0a0"/></linearGradient></defs><path d="M1 5.5C1 1.5 4 0.3 7 0.3C10 0.3 12 2 15 2C19 1.6 23 2.3 23 6.3C23 11 19 11.5 17 10.6C15 9 13 8.6 10 9C7 9.5 6 11.3 4 11.3C1.5 11.3 1 8.5 1 5.5Z" fill="url(#bgA)" stroke="#505050" stroke-width="1.1"/><rect x="12.4" y="12.9" width="11" height="11" rx="2" fill="#c9a206"/><path d="M17.9 14.399999999999999V22.4M14.399999999999999 16.4L21.4 20.4M14.399999999999999 20.4L21.4 16.4" stroke="#fff" stroke-width="1.2"/><circle cx="17.9" cy="18.4" r="1.8" fill="#c9a206" stroke="#fff" stroke-width="1"/></svg>
<svg class="a" style="left:157.5px;top:92.0px" width="24.0" height="24.0" viewBox="0 0 24 24"><defs><linearGradient id="bgA" x1="0" y1="0" x2="1" y2="1"><stop offset="0" stop-color="#a4dca4"/><stop offset="1" stop-color="#86b886"/></linearGradient><linearGradient id="bgG" x1="0" y1="0" x2="1" y2="1"><stop offset="0" stop-color="#c8c8c8"/><stop offset="1" stop-color="#a0a0a0"/></linearGradient></defs><path d="M1 5.5C1 1.5 4 0.3 7 0.3C10 0.3 12 2 15 2C19 1.6 23 2.3 23 6.3C23 11 19 11.5 17 10.6C15 9 13 8.6 10 9C7 9.5 6 11.3 4 11.3C1.5 11.3 1 8.5 1 5.5Z" fill="url(#bgA)" stroke="#505050" stroke-width="1.1"/><rect x="12.6" y="12.9" width="11" height="11" rx="1.5" fill="#3464aa"/><path d="M14.5 16.8H18.5V14.5L22.5 18.4L18.5 22.3V20H14.5Z" fill="#e8eef6"/></svg>
<svg class="a" style="left:193.0px;top:92.0px" width="24.0" height="24.0" viewBox="0 0 24 24"><path d="M1.6 20.5L8.9 6.4H20.8" fill="none" stroke="#333" stroke-width="1"/><circle cx="8.9" cy="6.4" r="2.6" fill="#8cc48c" stroke="#555" stroke-width=".9"/><path d="M12.5 11.6L21.4 21" stroke="#8a5010" stroke-width="3"/><path d="M12.5 11.6L21.4 21" stroke="#e08a20" stroke-width="1.8"/><path d="M21.4 12.7L11 22.6" stroke="#666" stroke-width="2.6"/><path d="M19 15L11.3 22.3" stroke="#e8e040" stroke-width="1.6"/><path d="M11.5 13Q13 9 16.5 10.5L14 13.5" fill="none" stroke="#555" stroke-width="1.1"/></svg>
<svg class="a" style="left:227.0px;top:92.0px" width="24.0" height="24.0" viewBox="0 0 24 24"><path d="M4 7H20" stroke="#d42a2a" stroke-width="2.6"/><path d="M9 6V3.5H15V6" fill="none" stroke="#d42a2a" stroke-width="1.8"/><path d="M5.5 9H18.5L17 23H7Z" fill="#d42a2a"/><path d="M9.5 11V21M12 11V21M14.5 11V21" stroke="#fff" stroke-width="1.3"/></svg>
<svg class="a" style="left:262.0px;top:92.0px" width="24.0" height="24.0" viewBox="0 0 24 24"><path d="M2 9L18 13M2 13L18 9" stroke="#777" stroke-width="1.1"/><ellipse cx="20" cy="7.5" rx="2.6" ry="2" fill="none" stroke="#c42020" stroke-width="1.6"/><ellipse cx="20" cy="14.5" rx="2.6" ry="2" fill="none" stroke="#c42020" stroke-width="1.6"/></svg>
<svg class="a" style="left:296.5px;top:92.0px" width="24.0" height="24.0" viewBox="0 0 24 24"><path d="M11.5 2.5H18L21.5 6V18.5H11.5Z" fill="#fff" stroke="#aaa"/><path d="M13.5 9H19.5M13.5 11H19.5M13.5 13H19.5M13.5 15H19.5" stroke="#aaa" stroke-width=".7"/><path d="M4.5 5.5H11L14.5 9V21.5H4.5Z" fill="#fff" stroke="#777"/><path d="M6.5 12H12.5M6.5 14H12.5M6.5 16H12.5M6.5 18H12.5" stroke="#777" stroke-width=".7"/></svg>
<svg class="a" style="left:331.5px;top:92.0px" width="24.0" height="24.0" viewBox="0 0 24 24"><rect x="4.5" y="4.5" width="15" height="18" fill="#eaeaea" stroke="#bbb"/><rect x="9" y="3" width="6" height="3" rx="1" fill="#ddd" stroke="#bbb"/><path d="M7.5 6.5H14L17.5 10V22.5H7.5Z" fill="#fff" stroke="#bbb"/><path d="M9.5 13H15.5M9.5 15H15.5M9.5 17H15.5M9.5 19H15.5" stroke="#bbb" stroke-width=".7"/></svg>
<svg class="a" style="left:367.0px;top:92.0px" width="24.0" height="24.0" viewBox="0 0 24 24"><path d="M3.5 2V20.5L12 12Z" fill="#bcd8f0" stroke="#2a5a7f"/><path d="M3 2L9 3L14 2L16.5 9L12 12Z" fill="#f08888" stroke="#e02020" stroke-width="1.1"/><circle cx="3" cy="2.5" r="1.6" fill="#fff" stroke="#e02020"/><circle cx="9" cy="3" r="1.4" fill="#fff" stroke="#e02020"/><circle cx="14" cy="2.5" r="1.4" fill="#fff" stroke="#e02020"/><circle cx="16.5" cy="9" r="1.4" fill="#fff" stroke="#e02020"/><circle cx="3.5" cy="21" r="1.4" fill="#fff" stroke="#2a5a7f"/><path d="M13 13L18 20Q20 22 22 20Q23.5 18 21.5 16L16 11" fill="none" stroke="#e02020" stroke-width="2.8"/></svg>
<svg class="a" style="left:401.0px;top:92.0px" width="24.0" height="24.0" viewBox="0 0 24 24"><rect x="1.5" y="1" width="10" height="5" fill="#aaa" stroke="#666" stroke-width=".8"/><path d="M6.5 1V6" stroke="#666" stroke-width=".7"/><path d="M5 6L12 22L20 3" fill="none" stroke="#6a9cc8" stroke-width="1.1"/><circle cx="12" cy="21.5" r="1.3" fill="#fff" stroke="#3a6891"/><circle cx="20" cy="3" r="1.3" fill="#fff" stroke="#3a6891"/><rect x="14" y="14" width="9" height="9" rx="1.5" fill="#c8a417"/><path d="M18.5 15.5V21.5M15.9 17.0L21.1 20.0M15.9 20.0L21.1 17.0" stroke="#fff" stroke-width="1.3"/><circle cx="18.5" cy="18.5" r="1.3" fill="#c8a417" stroke="#fff" stroke-width=".8"/></svg>
<svg class="a" style="left:437.0px;top:92.0px" width="24.0" height="24.0" viewBox="0 0 24 24"><rect x="0.8" y="3" width="22.4" height="18" fill="#fff" stroke="#2d5fc8" stroke-width="1.1"/><rect x="1" y="3" width="22" height="2.6" fill="#3a7ae0"/><text x="12" y="17.5" font-size="13" font-weight="bold" text-anchor="middle" fill="#111" font-family="Liberation Serif" letter-spacing="-0.5">xy</text><path d="M4 19.2H20" stroke="#333" stroke-width=".6" stroke-dasharray="1.5,1"/></svg>
<svg class="a" style="left:484.5px;top:92.0px" width="24.0" height="24.0" viewBox="0 0 24 24"><path d="M5.5 4.3H22V14.7H5.5L1.5 9.5Z" fill="#f8e040" stroke="#c8a010" stroke-width="1.1"/><text x="13.5" y="13.3" font-size="9" font-weight="bold" text-anchor="middle" fill="#222" font-family="Liberation Sans">abc</text></svg>
<svg class="a" style="left:520.5px;top:92.0px" width="24.0" height="24.0" viewBox="0 0 24 24"><rect x="0.8" y="4.3" width="23.4" height="17.4" fill="#dce8f6" stroke="#6a9ee8" stroke-width="1"/><path d="M5.5 4.3H19.3V14.7H5.5L1.5 9.5Z" fill="#f8e040" stroke="#c8a010" stroke-width="1.1"/><text x="10.5" y="13.3" font-size="9" font-weight="bold" text-anchor="middle" fill="#222" font-family="Liberation Sans">ab</text><path d="M15.5 8L16.5 14" stroke="#fff" stroke-width="1.4"/><circle cx="17.5" cy="17" r="3.9" fill="#b01818"/><circle cx="16.5" cy="15.8" r="1.2" fill="#e86060"/></svg>
<svg class="a" style="left:556.0px;top:92.0px" width="24.0" height="24.0" viewBox="0 0 24 24"><path d="M5.5 4.3H21V14.7H5.5L1.5 9.5Z" fill="#efefef" stroke="#b8b8b8" stroke-width="1.1"/><text x="11.5" y="13.3" font-size="9" font-weight="bold" text-anchor="middle" fill="#999" font-family="Liberation Sans">ab</text><path d="M17 8L18 14" stroke="#fff" stroke-width="1.4"/><circle cx="18.5" cy="18" r="4.2" fill="#8a8a8a"/></svg>
<svg class="a" style="left:591.0px;top:92.0px" width="24.0" height="24.0" viewBox="0 0 24 24"><path d="M5.5 4.3H22V14.7H5.5L1.5 9.5Z" fill="#efefef" stroke="#b8b8b8" stroke-width="1.1"/><text x="13.5" y="13.3" font-size="9" font-weight="bold" text-anchor="middle" fill="#999" font-family="Liberation Sans">abc</text><path d="M8 19.5Q14 14.5 20 19.5Q14 24.5 8 19.5Z" fill="#fff" stroke="#888" stroke-width=".9"/><circle cx="14" cy="19.5" r="1.8" fill="#555"/></svg>
<svg class="a" style="left:626.0px;top:92.0px" width="24.0" height="24.0" viewBox="0 0 24 24"><path d="M5.5 4.3H22V14.7H5.5L1.5 9.5Z" fill="#efefef" stroke="#b8b8b8" stroke-width="1.1"/><text x="13.5" y="13.3" font-size="9" font-weight="bold" text-anchor="middle" fill="#999" font-family="Liberation Sans">abc</text><rect x="14" y="14" width="9.5" height="9.5" fill="#a8a8a8"/><path d="M15 18.7H19.5V16.5L22.5 18.7L19.5 21V19" fill="#fff" stroke="#fff" stroke-width=".8"/></svg>
<svg class="a" style="left:661.0px;top:92.0px" width="24.0" height="24.0" viewBox="0 0 24 24"><path d="M5.5 4.3H22V14.7H5.5L1.5 9.5Z" fill="#efefef" stroke="#b8b8b8" stroke-width="1.1"/><text x="13.5" y="13.3" font-size="9" font-weight="bold" text-anchor="middle" fill="#999" font-family="Liberation Sans">abc</text><rect x="14" y="14" width="9.5" height="9.5" fill="#a8a8a8"/><path d="M16.5 19A2.5 2.5 0 1 1 19 21.5" fill="none" stroke="#fff" stroke-width="1.3"/></svg>
<svg class="a" style="left:696.0px;top:92.0px" width="24.0" height="24.0" viewBox="0 0 24 24"><path d="M5.5 4.3H22V14.7H5.5L1.5 9.5Z" fill="#efefef" stroke="#b8b8b8" stroke-width="1.1"/><text x="13.5" y="13.3" font-size="9" font-weight="bold" text-anchor="middle" fill="#999" font-family="Liberation Sans">abc</text><rect x="14" y="14" width="9.5" height="9.5" fill="#cfcfcf"/><path d="M15.5 22L22 15.5" stroke="#fff" stroke-width="1.8"/></svg>
<svg class="a" style="left:745.0px;top:92.0px" width="24.0" height="24.0" viewBox="0 0 24 24"><rect x="2.5" y="9.5" width="18" height="12" fill="none" stroke="#bbb"/><rect x="4.5" y="3.5" width="18" height="15" fill="#fff" stroke="#aaa"/><text x="13.5" y="15" font-size="8.5" text-anchor="middle" fill="#444" font-family="Liberation Mono">CSW</text></svg>
<svg class="a" style="left:780.0px;top:92.0px" width="24.0" height="24.0" viewBox="0 0 24 24"><defs><radialGradient id="gg" cx=".5" cy=".5" r=".6"><stop offset="0" stop-color="#9ec4ea"/><stop offset=".7" stop-color="#4a88cc"/><stop offset="1" stop-color="#3a68a8"/></radialGradient></defs><circle cx="11" cy="10" r="9.5" fill="url(#gg)"/><path d="M1.5 10H20.5M11 .5V19.5M3 5H19M3 15H19" stroke="#dce8f4" stroke-width=".8"/><ellipse cx="11" cy="10" rx="4" ry="9.5" fill="none" stroke="#dce8f4" stroke-width=".8"/><rect x="12" y="13" width="9" height="9" rx="2" fill="#5b8f5b"/><path d="M16.5 14.8V20.2M13.8 17.5H19.2" stroke="#fff" stroke-width="1.89"/><path d="M19 21h5l-2.5 3z" fill="#000"/></svg>
<svg class="a" style="left:815.0px;top:92.0px" width="24.0" height="24.0" viewBox="0 0 24 24"><path d="M2 2H8L13 12L8 22H2L7 12Z" fill="#1d6ec8"/><path d="M16 2H22L17 12L22 22H16L11 12Z" fill="#222"/></svg>
<svg class="a" style="left:864.0px;top:92.0px" width="24.0" height="24.0" viewBox="0 0 24 24"><path d="M11.5 1.5C7 1.5 7.5 3.5 7.5 3.5V6H12V7H5C3 7 1.5 8.5 1.5 12C1.5 15.5 3 17 5 17H7V14C7 12.5 8.5 11 10 11H14.5C16 11 17 10 17 8.5V4C17 2.5 15.5 1.5 11.5 1.5Z" fill="#3f7ab0"/><path d="M12.5 22.5C17 22.5 16.5 20.5 16.5 20.5V18H12V17H19C21 17 22.5 15.5 22.5 12C22.5 8.5 21 7 19 7H17V10C17 11.5 15.5 13 14 13H9.5C8 13 7 14 7 15.5V20C7 21.5 8.5 22.5 12.5 22.5Z" fill="#f5d84a"/><path d="M14 16L20 18.5L14 21" fill="none" stroke="#666" stroke-width="1.2"/></svg>
<svg class="a" style="left:899.0px;top:92.0px" width="24.0" height="24.0" viewBox="0 0 24 24"><rect x="2.0" y="2.0" width="4" height="4" rx=".7" fill="#9ac060" stroke="#aaa" stroke-width=".3"/><rect x="7.3" y="2.0" width="4" height="4" rx=".7" fill="#80bce8" stroke="#aaa" stroke-width=".3"/><rect x="12.6" y="2.0" width="4" height="4" rx=".7" fill="#f09870" stroke="#aaa" stroke-width=".3"/><rect x="17.9" y="2.0" width="4" height="4" rx=".7" fill="#c8a8e8" stroke="#aaa" stroke-width=".3"/><rect x="2.0" y="7.3" width="4" height="4" rx=".7" fill="#c8a8e8" stroke="#aaa" stroke-width=".3"/><rect x="7.3" y="7.3" width="4" height="4" rx=".7" fill="#f09870" stroke="#aaa" stroke-width=".3"/><rect x="12.6" y="7.3" width="4" height="4" rx=".7" fill="#80bce8" stroke="#aaa" stroke-width=".3"/><rect x="17.9" y="7.3" width="4" height="4" rx=".7" fill="#9ac060" stroke="#aaa" stroke-width=".3"/><rect x="2.0" y="12.6" width="4" height="4" rx=".7" fill="#9ac060" stroke="#aaa" stroke-width=".3"/><rect x="7.3" y="12.6" width="4" height="4" rx=".7" fill="#80bce8" stroke="#aaa" stroke-width=".3"/><rect x="12.6" y="12.6" width="4" height="4" rx=".7" fill="#f09870" stroke="#aaa" stroke-width=".3"/><rect x="17.9" y="12.6" width="4" height="4" rx=".7" fill="#c8a8e8" stroke="#aaa" stroke-width=".3"/><rect x="2.0" y="17.9" width="4" height="4" rx=".7" fill="#f09870" stroke="#aaa" stroke-width=".3"/><rect x="7.3" y="17.9" width="4" height="4" rx=".7" fill="#c8a8e8" stroke="#aaa" stroke-width=".3"/><rect x="12.6" y="17.9" width="4" height="4" rx=".7" fill="#9ac060" stroke="#aaa" stroke-width=".3"/><rect x="17.9" y="17.9" width="4" height="4" rx=".7" fill="#80bce8" stroke="#aaa" stroke-width=".3"/></svg>
<svg class="a" style="left:934.5px;top:92.0px" width="24.0" height="24.0" viewBox="0 0 24 24"><rect x="0.5" y="0.5" width="23" height="23" rx="4" fill="#f0d850"/><path d="M4 21L9 16M8 12L12 16L17 11L13 7Z" stroke="#1a4a1a" stroke-width="1" fill="#3a9a30"/><path d="M14 6L17 3M18 10L21 7" stroke="#111" stroke-width="1.8"/><path d="M4 21L10 15" stroke="#3a9a30" stroke-width="2.5"/></svg>
<svg class="a" style="left:969.0px;top:92.0px" width="24.0" height="24.0" viewBox="0 0 24 24"><text x="12" y="12" font-size="11" text-anchor="middle" fill="#222" font-family="Liberation Sans">x,y</text><circle cx="11" cy="17.5" r="2" fill="#e00"/></svg>
<svg class="a" style="left:36.0px;top:113.0px" width="9" height="5"><path d="M0 0h9l-4.5 5z" fill="#000"/></svg>
<svg class="a" style="left:16.5px;top:131.0px" width="24.0" height="24.0" viewBox="0 0 24 24"><path d="M2.5 2.5V22.5H22.5Z" fill="#d4d4d4" stroke="#bbb"/><path d="M6 11V19H14Z" fill="#f0f0f0" stroke="#bbb" stroke-width=".8"/><rect x="15" y="3" width="5" height="17" fill="#e2e2e2" stroke="#bbb" stroke-width=".8"/></svg>
<svg class="a" style="left:52.0px;top:131.0px" width="24.0" height="24.0" viewBox="0 0 24 24"><path d="M2 9L8 3V6.5H12Q20 6.5 20 14Q20 20 13 21.5Q17 19 16.5 14.5Q16 11.5 12 11.5H8V15Z" fill="#7cbf7c" stroke="#4a8a4a" stroke-width=".9"/></svg>
<svg class="a" style="left:86.5px;top:131.0px" width="24.0" height="24.0" viewBox="0 0 24 24"><path d="M22 9L16 3V6.5H12Q4 6.5 4 14Q4 20 11 21.5Q7 19 7.5 14.5Q8 11.5 12 11.5H16V15Z" fill="#cfcfcf" stroke="#aaa" stroke-width=".9"/></svg>
<svg class="a" style="left:122.0px;top:131.0px" width="24.0" height="24.0" viewBox="0 0 24 24"><defs><linearGradient id="bgA" x1="0" y1="0" x2="1" y2="1"><stop offset="0" stop-color="#a4dca4"/><stop offset="1" stop-color="#86b886"/></linearGradient><linearGradient id="bgG" x1="0" y1="0" x2="1" y2="1"><stop offset="0" stop-color="#c8c8c8"/><stop offset="1" stop-color="#a0a0a0"/></linearGradient></defs><path d="M1 5.5C1 1.5 4 0.3 7 0.3C10 0.3 12 2 15 2C19 1.6 23 2.3 23 6.3C23 11 19 11.5 17 10.6C15 9 13 8.6 10 9C7 9.5 6 11.3 4 11.3C1.5 11.3 1 8.5 1 5.5Z" fill="url(#bgA)" stroke="#505050" stroke-width="1.1"/><rect x="13" y="13" width="11" height="11" fill="#1e4a92"/><path d="M15.5 19A3 3 0 1 1 18.5 22" fill="none" stroke="#fff" stroke-width="1.2"/><path d="M16.5 21.5L18.7 22.2L17.8 24" fill="none" stroke="#fff" stroke-width="1"/><path d="M18.5 17.2V20.2M17 18.7H20" stroke="#fff" stroke-width=".9"/></svg>
<svg class="a" style="left:157.0px;top:131.0px" width="24.0" height="24.0" viewBox="0 0 24 24"><circle cx="7.4" cy="7.6" r="7.2" fill="#a6daa6" stroke="#8ab88a" stroke-width=".8"/><path d="M11 8.6L15.5 7L20 8.6L24 15.75L20 22.9H11L7 15.75Z" transform="translate(0,0)" fill="#a6c8e2" stroke="#4a7090" stroke-width=".9"/><path d="M6.5 5Q12 1.5 15.5 8Q16.5 11 15.8 15.5M13.5 13L15.8 16L17.8 13" fill="none" stroke="#333" stroke-width="1.1"/></svg>
<svg class="a" style="left:192.5px;top:131.0px" width="24.0" height="24.0" viewBox="0 0 24 24"><defs><linearGradient id="bgA" x1="0" y1="0" x2="1" y2="1"><stop offset="0" stop-color="#a4dca4"/><stop offset="1" stop-color="#86b886"/></linearGradient><linearGradient id="bgG" x1="0" y1="0" x2="1" y2="1"><stop offset="0" stop-color="#c8c8c8"/><stop offset="1" stop-color="#a0a0a0"/></linearGradient></defs><path d="M1 5.5C1 1.5 4 0.3 7 0.3C10 0.3 12 2 15 2C19 1.6 23 2.3 23 6.3C23 11 19 11.5 17 10.6C15 9 13 8.6 10 9C7 9.5 6 11.3 4 11.3C1.5 11.3 1 8.5 1 5.5Z" fill="url(#bgA)" stroke="#505050" stroke-width="1.1"/><ellipse cx="8.1" cy="5.8" rx="4.3" ry="2.7" fill="#fff" stroke="#505050" stroke-width=".9"/><rect x="12.5" y="13" width="11" height="11" rx="2" fill="#c9a206"/><path d="M18.0 14.5V22.5M14.5 16.5L21.5 20.5M14.5 20.5L21.5 16.5" stroke="#fff" stroke-width="1.2"/><circle cx="18.0" cy="18.5" r="1.8" fill="#c9a206" stroke="#fff" stroke-width="1"/></svg>
<svg class="a" style="left:227.0px;top:131.0px" width="24.0" height="24.0" viewBox="0 0 24 24"><defs><linearGradient id="bgA" x1="0" y1="0" x2="1" y2="1"><stop offset="0" stop-color="#a4dca4"/><stop offset="1" stop-color="#86b886"/></linearGradient><linearGradient id="bgG" x1="0" y1="0" x2="1" y2="1"><stop offset="0" stop-color="#c8c8c8"/><stop offset="1" stop-color="#a0a0a0"/></linearGradient></defs><path d="M1 5.5C1 1.5 4 0.3 7 0.3C10 0.3 12 2 15 2C19 1.6 23 2.3 23 6.3C23 11 19 11.5 17 10.6C15 9 13 8.6 10 9C7 9.5 6 11.3 4 11.3C1.5 11.3 1 8.5 1 5.5Z" fill="url(#bgG)" stroke="#505050" stroke-width="1.1"/><path d="M1 22C0 18 2 13.5 6 12.8C9 12.3 11.5 13.5 11 16.5C10.5 20.5 7 23.3 4 23.3C2 23.3 1.2 22.8 1 22Z" fill="#86b886" stroke="#505050" stroke-width="1"/><rect x="13" y="13" width="11" height="11" rx="2" fill="#c9a206"/><path d="M18.5 14.5V22.5M15.0 16.5L22.0 20.5M15.0 20.5L22.0 16.5" stroke="#fff" stroke-width="1.2"/><circle cx="18.5" cy="18.5" r="1.8" fill="#c9a206" stroke="#fff" stroke-width="1"/></svg>
<svg class="a" style="left:262.0px;top:131.0px" width="24.0" height="24.0" viewBox="0 0 24 24"><defs><linearGradient id="bgA" x1="0" y1="0" x2="1" y2="1"><stop offset="0" stop-color="#a4dca4"/><stop offset="1" stop-color="#86b886"/></linearGradient><linearGradient id="bgG" x1="0" y1="0" x2="1" y2="1"><stop offset="0" stop-color="#c8c8c8"/><stop offset="1" stop-color="#a0a0a0"/></linearGradient></defs><path d="M0.5 6C0.5 1.5 4 0.3 7.5 0.3C11 0.3 13 2 16 2C20.5 1.6 23 3 23 7.5V13C20 12 18 13.5 15 14Q11 15.8 8 15.7C2.5 15.5 0.5 11 0.5 6Z" fill="url(#bgG)" stroke="#606060" stroke-width="1"/><ellipse cx="8" cy="6.7" rx="5" ry="4" fill="#5c9a5c" stroke="#505050" stroke-width=".8"/><rect x="13" y="13" width="11" height="11" rx="2" fill="#c9a206"/><path d="M18.5 14.5V22.5M15.0 16.5L22.0 20.5M15.0 20.5L22.0 16.5" stroke="#fff" stroke-width="1.2"/><circle cx="18.5" cy="18.5" r="1.8" fill="#c9a206" stroke="#fff" stroke-width="1"/></svg>
<svg class="a" style="left:297.0px;top:131.0px" width="24.0" height="24.0" viewBox="0 0 24 24"><defs><linearGradient id="bgA" x1="0" y1="0" x2="1" y2="1"><stop offset="0" stop-color="#a4dca4"/><stop offset="1" stop-color="#86b886"/></linearGradient><linearGradient id="bgG" x1="0" y1="0" x2="1" y2="1"><stop offset="0" stop-color="#c8c8c8"/><stop offset="1" stop-color="#a0a0a0"/></linearGradient></defs><path d="M1 5.5C1 1.5 4 0.3 7 0.3C10 0.3 12 2 15 2C19 1.6 23 2.3 23 6.3C23 11 19 11.5 17 10.6C15 9 13 8.6 10 9C7 9.5 6 11.3 4 11.3C1.5 11.3 1 8.5 1 5.5Z" fill="url(#bgA)" stroke="#505050" stroke-width="1.1"/><ellipse cx="8.1" cy="5.8" rx="4.3" ry="2.7" fill="#fff" stroke="#505050" stroke-width=".9"/><rect x="13.6" y="13.3" width="10.6" height="10.6" rx="1.5" fill="#e05a5a"/><path d="M15.899999999999999 15.600000000000001L21.9 21.599999999999998M21.9 15.600000000000001L15.899999999999999 21.599999999999998" stroke="#fff" stroke-width="1.6"/></svg>
<svg class="a" style="left:332.0px;top:131.0px" width="24.0" height="24.0" viewBox="0 0 24 24"><defs><linearGradient id="bgA" x1="0" y1="0" x2="1" y2="1"><stop offset="0" stop-color="#a4dca4"/><stop offset="1" stop-color="#86b886"/></linearGradient><linearGradient id="bgG" x1="0" y1="0" x2="1" y2="1"><stop offset="0" stop-color="#c8c8c8"/><stop offset="1" stop-color="#a0a0a0"/></linearGradient></defs><path d="M1 5.5C1 1.5 4 0.3 7 0.3C10 0.3 12 2 15 2C19 1.6 23 2.3 23 6.3C23 11 19 11.5 17 10.6C15 9 13 8.6 10 9C7 9.5 6 11.3 4 11.3C1.5 11.3 1 8.5 1 5.5Z" fill="url(#bgG)" stroke="#505050" stroke-width="1.1"/><path d="M1 22C0 18 2 13.5 6 12.8C9 12.3 11.5 13.5 11 16.5C10.5 20.5 7 23.3 4 23.3C2 23.3 1.2 22.8 1 22Z" fill="#86b886" stroke="#505050" stroke-width="1"/><rect x="13.6" y="13.3" width="10.6" height="10.6" rx="1.5" fill="#e05a5a"/><path d="M15.899999999999999 15.600000000000001L21.9 21.599999999999998M21.9 15.600000000000001L15.899999999999999 21.599999999999998" stroke="#fff" stroke-width="1.6"/></svg>
<svg class="a" style="left:367.0px;top:131.0px" width="24.0" height="24.0" viewBox="0 0 24 24"><defs><linearGradient id="bgA" x1="0" y1="0" x2="1" y2="1"><stop offset="0" stop-color="#a4dca4"/><stop offset="1" stop-color="#86b886"/></linearGradient><linearGradient id="bgG" x1="0" y1="0" x2="1" y2="1"><stop offset="0" stop-color="#c8c8c8"/><stop offset="1" stop-color="#a0a0a0"/></linearGradient></defs><path d="M1 6C1 1.5 4 0.5 7.5 0.5C11 0.5 13 2 16 2C20 1.8 23 2.8 23 6.5C23 11 19.5 12 16.5 11.5C13 11 9 12 7 15Q4 19.5 2.5 18.5Q1 17 1 13Z" fill="url(#bgA)" stroke="#505050" stroke-width="1.1"/><path d="M1.4 11.5Q5 13.5 11.4 10.8Q8 14 6 17.5Q3 19.8 2.2 17Z" fill="#f0d83a" stroke="#505050" stroke-width=".6"/></svg>
<svg class="a" style="left:402.0px;top:131.0px" width="24.0" height="24.0" viewBox="0 0 24 24"><defs><radialGradient id="sgr" cx=".5" cy=".5" r=".6"><stop offset="0" stop-color="#d8d8d8"/><stop offset="1" stop-color="#b8b8b8"/></radialGradient></defs><path d="M0.5 7C0.5 1.5 4 0.2 8 0.8Q12 1.8 16 1Q23.5 0 23.5 8Q23.5 15 19 16.5Q15 17 12 14.5Q9 13 6 15.5Q0.5 16 0.5 7Z" fill="#e4e4e4" stroke="#777" stroke-width="1"/><path d="M3 7.5C3 3.5 6 3.3 9 4Q12 4.8 15.5 4Q21 3.5 21 8Q21 12.5 18 13.5Q15 13.3 12 11.5Q9 10.8 6 12.5Q3 12.5 3 7.5Z" fill="url(#sgr)"/></svg>
<svg class="a" style="left:436.5px;top:131.0px" width="24.0" height="24.0" viewBox="0 0 24 24"><defs><linearGradient id="bgA" x1="0" y1="0" x2="1" y2="1"><stop offset="0" stop-color="#a4dca4"/><stop offset="1" stop-color="#86b886"/></linearGradient><linearGradient id="bgG" x1="0" y1="0" x2="1" y2="1"><stop offset="0" stop-color="#c8c8c8"/><stop offset="1" stop-color="#a0a0a0"/></linearGradient></defs><path d="M0.5 6C0.5 2 3 0.3 6.5 0.3C10 0.3 13.5 2 13.5 5.5C13.5 10 9 11.5 6.5 11.5C3 11.5 0.5 9.5 0.5 6Z" fill="url(#bgA)" stroke="#505050"/><path d="M15.4 1.5Q19 1 21.5 3.5Q22.5 6 22 9Q20.5 12 16.5 11.5Q15 7 15.4 1.5Z" fill="url(#bgA)" stroke="#505050"/><path d="M12.5 0.5L9.5 13.5M10 0.5L12.5 13.5" stroke="#555" stroke-width="1"/><path d="M9.8 9L11 13.5M12.8 9L11.2 13.5" stroke="#fff" stroke-width="1.3"/><ellipse cx="10" cy="19.5" rx="2.2" ry="3.8" transform="rotate(20 10 19.5)" fill="none" stroke="#b81010" stroke-width="1.6"/><ellipse cx="16.9" cy="18.2" rx="2.2" ry="3.6" transform="rotate(-25 16.9 18.2)" fill="none" stroke="#b81010" stroke-width="1.6"/></svg>
<svg class="a" style="left:470.5px;top:131.0px" width="24.0" height="24.0" viewBox="0 0 24 24"><defs><linearGradient id="bgA" x1="0" y1="0" x2="1" y2="1"><stop offset="0" stop-color="#a4dca4"/><stop offset="1" stop-color="#86b886"/></linearGradient><linearGradient id="bgG" x1="0" y1="0" x2="1" y2="1"><stop offset="0" stop-color="#c8c8c8"/><stop offset="1" stop-color="#a0a0a0"/></linearGradient></defs><path d="M0.5 5C0.5 1.5 3 0.3 6.5 0.3C10 0.3 13.5 2 13.5 5C13.5 8.5 9 9.5 6.5 9.5C3 9.5 0.5 8 0.5 5Z" fill="url(#bgA)" stroke="#505050"/><path d="M15.4 1.5Q19 1 21.5 3.5Q22 6 21 8.5Q18 9.5 15.8 9Q15 5 15.4 1.5Z" fill="url(#bgA)" stroke="#505050"/><path d="M0.5 12H5L6 15L4 18.5H1Z" fill="#90c890" stroke="#505050" stroke-width=".6"/><path d="M16.5 12Q20 11.5 22 13.5Q23 16 21.5 18L18 15.5Z" fill="#90c890" stroke="#505050" stroke-width=".6"/><path d="M12.5 0.5L9.5 13.5M10 0.5L12.5 13.5" stroke="#555" stroke-width="1"/><path d="M9.8 9L11 13.5M12.8 9L11.2 13.5" stroke="#fff" stroke-width="1.3"/><ellipse cx="10" cy="19.5" rx="2.2" ry="3.8" transform="rotate(20 10 19.5)" fill="none" stroke="#b81010" stroke-width="1.6"/><ellipse cx="16.9" cy="18.2" rx="2.2" ry="3.6" transform="rotate(-25 16.9 18.2)" fill="none" stroke="#b81010" stroke-width="1.6"/></svg>
<svg class="a" style="left:507.0px;top:131.0px" width="24.0" height="24.0" viewBox="0 0 24 24"><defs><linearGradient id="bgA" x1="0" y1="0" x2="1" y2="1"><stop offset="0" stop-color="#a4dca4"/><stop offset="1" stop-color="#86b886"/></linearGradient><linearGradient id="bgG" x1="0" y1="0" x2="1" y2="1"><stop offset="0" stop-color="#c8c8c8"/><stop offset="1" stop-color="#a0a0a0"/></linearGradient></defs><path d="M0.5 6.5C0 2 3 0.3 7 0.3Q9.5 0.5 12 2Q14.5 0.5 17 0.3C21 0.3 24 2 23.5 6.5C23.2 10.5 21 13 18 13Q15 12 12 9.5Q9 12 6 13C3 13 0.8 10.5 0.5 6.5Z" fill="url(#bgA)" stroke="#505050"/><path d="M9.5 2.5L9 11M12.5 2L12 10.5M7.5 4H14.5M7.5 6.5H14.5M7.5 9H14.5" stroke="#444" stroke-width=".9"/><path d="M11 12Q9 14.5 11.5 16.5Q13.5 18.5 10.5 20.5Q12 22 13 23" fill="none" stroke="#444" stroke-width=".9"/></svg>
<svg class="a" style="left:541.5px;top:131.0px" width="24.0" height="24.0" viewBox="0 0 24 24"><defs><linearGradient id="pg1" x1="0" y1="0" x2="1" y2="0"><stop offset="0" stop-color="#888"/><stop offset="1" stop-color="#ddd"/></linearGradient></defs><path d="M12 11L10 8L14.5 0.3H24L20 7L14.5 11.5Z" fill="url(#pg1)" stroke="#777" stroke-width=".5"/><path d="M11 10.5L11.5 13.5" stroke="#777" stroke-width="1.2"/><rect x="2.3" y="18.3" width="19.2" height="5.6" fill="#7498b8" stroke="#35587a" stroke-width=".9"/><path d="M11.5 14.5L13.3 18L11.5 21.2L9.7 18Z" fill="#f8e070" stroke="#35587a" stroke-width=".5"/></svg>
<svg class="a" style="left:576.5px;top:131.0px" width="24.0" height="24.0" viewBox="0 0 24 24"><path d="M8.5 21A9.5 9.5 0 1 1 19 6.5" fill="none" stroke="#c0c0c0" stroke-width="2.6"/><path d="M15.5 8.5L22.5 10.5L22 4Z" fill="#c0c0c0"/></svg>
<svg class="a" style="left:624.0px;top:131.0px" width="24.0" height="24.0" viewBox="0 0 24 24"><path d="M2.5 23V10M2.5 23H9" stroke="#999" stroke-width=".8"/><rect x="4.5" y="7.5" width="14" height="14" fill="#e8e8e8" stroke="#aaa" stroke-width=".6"/><text x="12.5" y="11" font-size="10" font-weight="bold" text-anchor="middle" fill="#1a1ae8" font-family="Liberation Sans" transform="scale(1,1.05)">CSV</text><text x="12.5" y="21.5" font-size="10" font-weight="bold" text-anchor="middle" fill="#1a1ae8" font-family="Liberation Sans">SHP</text></svg>
<svg class="a" style="left:660.0px;top:131.0px" width="24.0" height="24.0" viewBox="0 0 24 24"><path d="M2.5 22V9M2.5 22H9" stroke="#999" stroke-width=".8"/><rect x="5.5" y="3.5" width="16" height="16" fill="#e6e6e6" stroke="#888"/><path d="M9 12A2 2 0 1 1 13 12L11 15Z M15 7A2 2 0 1 1 19 7L17 10Z" fill="#b01010"/></svg>
<svg class="a" style="left:699.0px;top:131.0px" width="24.0" height="24.0" viewBox="0 0 24 24"><rect x="1.5" y="1" width="21" height="7" fill="#e8e8e8" stroke="#c8c8c8" stroke-width=".6"/><path d="M3 3.5H8M14 3.5H21" stroke="#bbb" stroke-width=".8"/><path d="M1.5 7.8H22.5" stroke="#8cd848" stroke-width="1.2"/><path d="M3 13Q3 9.5 7 9.5H17Q21 9.5 21 13V16H3Z" fill="#1e1e1e"/><circle cx="6" cy="17.5" r="5.5" fill="#262626"/><circle cx="18" cy="17.5" r="5.5" fill="#262626"/><circle cx="6" cy="18.3" r="2.4" fill="#a86020"/><circle cx="18" cy="18.3" r="2.4" fill="#a86020"/><rect x="10" y="11" width="4" height="6" fill="#444"/></svg>
<svg class="a" style="left:748.5px;top:131.0px" width="24.0" height="24.0" viewBox="0 0 24 24"><path d="M2 2H8L13 12L8 22H2L7 12Z" fill="#1d6ec8"/><path d="M16 2H22L17 12L22 22H16L11 12Z" fill="#222"/><path d="M7 17L14 7L18 10L11 20Z" fill="#d8d8d8" stroke="#888" stroke-width=".7"/><path d="M13 18L16 21L22 14" fill="none" stroke="#1a9a2a" stroke-width="2.2"/></svg>
<svg class="a" style="left:796.5px;top:131.0px" width="24.0" height="24.0" viewBox="0 0 24 24"><path d="M3 21L17 6" stroke="#2440b8" stroke-width="4" stroke-linecap="round"/><path d="M15 8L17 6" stroke="#fff" stroke-width="1.2"/><path d="M5 3L6 5L8 6L6 7L5 9L4 7L2 6L4 5Z M9 2L9.5 3.5L11 4L9.5 4.5L9 6L8.5 4.5L7 4L8.5 3.5Z M19 13L19.5 14.5L21 15L19.5 15.5L19 17Z" fill="#2440b8"/></svg>
<svg class="a" style="left:846.0px;top:131.0px" width="24.0" height="24.0" viewBox="0 0 24 24"><polyline points="4.5,21.3 2.3,14.7" fill="none" stroke="#2d5a86" stroke-width="1.1"/><polyline points="2.3,14.7 7.7,5.8 12.8,2.5 20.7,2.5" fill="none" stroke="#f01818" stroke-width="1.1"/><polyline points="20.7,2.5 21.5,10.7" fill="none" stroke="#2d5a86" stroke-width="1.1"/><circle cx="2.3" cy="14.7" r="1.9" fill="#d2ecfa" stroke="#2d5a86" stroke-width="1.2"/><circle cx="4.5" cy="21.3" r="1.9" fill="#d2ecfa" stroke="#2d5a86" stroke-width="1.2"/><circle cx="7.7" cy="5.8" r="1.9" fill="#d2ecfa" stroke="#f01818" stroke-width="1.2"/><circle cx="12.8" cy="2.5" r="1.9" fill="#d2ecfa" stroke="#f01818" stroke-width="1.2"/><circle cx="20.7" cy="2.5" r="1.9" fill="#d2ecfa" stroke="#2d5a86" stroke-width="1.2"/><circle cx="21.5" cy="10.7" r="1.9" fill="#d2ecfa" stroke="#2d5a86" stroke-width="1.2"/><rect x="13" y="14" width="10" height="10" rx="2" fill="#f6d51a"/><text x="18.0" y="22.7" font-size="9" font-weight="bold" text-anchor="middle" fill="#a9a9a9" font-family="Liberation Sans">S</text></svg>
<svg class="a" style="left:881.0px;top:131.0px" width="24.0" height="24.0" viewBox="0 0 24 24"><polyline points="2.3,21.4 5.7,10.7" fill="none" stroke="#2d5a86" stroke-width="1.1"/><polyline points="5.7,10.7 7.3,2.4" fill="none" stroke="#5a9ad8" stroke-width="1.1"/><polyline points="7.3,2.4 20.8,2.4" fill="none" stroke="#2d5a86" stroke-width="1.1"/><circle cx="2.3" cy="21.4" r="1.9" fill="#d2ecfa" stroke="#2d5a86" stroke-width="1.2"/><circle cx="5.7" cy="10.7" r="1.9" fill="#d2ecfa" stroke="#2d5a86" stroke-width="1.2"/><circle cx="7.3" cy="2.4" r="1.9" fill="#d2ecfa" stroke="#5a9ad8" stroke-width="1.2"/><circle cx="14" cy="2.4" r="1.9" fill="#d2ecfa" stroke="#2d5a86" stroke-width="1.2"/><circle cx="20.8" cy="2.4" r="1.9" fill="#d2ecfa" stroke="#2d5a86" stroke-width="1.2"/><rect x="14" y="14" width="10" height="10" rx="2" fill="#5b8f5b"/><path d="M19.0 16.0V22.0M16.0 19.0H22.0" stroke="#fff" stroke-width="2.10"/></svg>
<svg class="a" style="left:919.0px;top:131.0px" width="24.0" height="24.0" viewBox="0 0 24 24"><circle cx="2.7" cy="5.1" r="1.9" fill="#d2ecfa" stroke="#2d5a86" stroke-width="1.2"/><circle cx="11.2" cy="2.4" r="1.9" fill="#d2ecfa" stroke="#f01818" stroke-width="1.2"/><circle cx="21.4" cy="2.4" r="1.9" fill="#d2ecfa" stroke="#2d5a86" stroke-width="1.2"/><circle cx="6.2" cy="12.2" r="1.9" fill="#d2ecfa" stroke="#2d5a86" stroke-width="1.2"/><circle cx="14.6" cy="10" r="1.9" fill="#d2ecfa" stroke="#f01818" stroke-width="1.2"/><circle cx="4.8" cy="20.5" r="1.9" fill="#d2ecfa" stroke="#2d5a86" stroke-width="1.2"/><rect x="14" y="14" width="10" height="10" rx="2" fill="#f6d51a"/><text x="19.0" y="22.7" font-size="9" font-weight="bold" text-anchor="middle" fill="#a9a9a9" font-family="Liberation Sans">S</text></svg>
<svg class="a" style="left:954.0px;top:131.0px" width="24.0" height="24.0" viewBox="0 0 24 24"><path d="M0.2 3.3Q10 0 22.9 2.2" fill="none" stroke="#5a9ad8" stroke-width="1"/><path d="M8.4 4Q2 9 4.5 17.8" fill="none" stroke="#5a9ad8" stroke-width="1"/><path d="M8.4 4Q13 9 12.3 14.6" fill="none" stroke="#5a9ad8" stroke-width="1"/><circle cx="8.4" cy="4" r="1.9" fill="#d2ecfa" stroke="#2d5a86" stroke-width="1.2"/><rect x="14" y="14" width="10" height="10" rx="2" fill="#5b8f5b"/><path d="M19.0 16.0V22.0M16.0 19.0H22.0" stroke="#fff" stroke-width="2.10"/></svg>
<svg class="a" style="left:991.5px;top:131.0px" width="24.0" height="24.0" viewBox="0 0 24 24"><polyline points="2.8,14.6 15.2,2.4 21.9,10.7" fill="none" stroke="#2d5a86" stroke-width="1.1"/><polyline points="2.8,14.6 4.9,21.4" fill="none" stroke="#2d5a86" stroke-width="1.1"/><circle cx="3.1" cy="2.4" r="1.9" fill="#d2ecfa" stroke="#f01818" stroke-width="1.2"/><circle cx="15.2" cy="2.4" r="1.9" fill="#d2ecfa" stroke="#f01818" stroke-width="1.2"/><circle cx="21.9" cy="10.7" r="1.9" fill="#d2ecfa" stroke="#2d5a86" stroke-width="1.2"/><circle cx="2.8" cy="14.6" r="1.9" fill="#d2ecfa" stroke="#f01818" stroke-width="1.2"/><circle cx="4.9" cy="21.4" r="1.9" fill="#d2ecfa" stroke="#2d5a86" stroke-width="1.2"/><rect x="14" y="14" width="10" height="10" rx="2" fill="#f6d51a"/><text x="19.0" y="22.7" font-size="9" font-weight="bold" text-anchor="middle" fill="#a9a9a9" font-family="Liberation Sans">S</text></svg>
<svg class="a" style="left:1025.0px;top:131.0px" width="24.0" height="24.0" viewBox="0 0 24 24"><polyline points="4.3,2.4 13.2,10.7" fill="none" stroke="#5a9ad8" stroke-width="1.1"/><polyline points="21,2.4 13.2,10.7 4.3,21" fill="none" stroke="#2d5a86" stroke-width="1.1"/><path d="M9.3 5.4Q13.5 1.5 17.4 5.4" fill="none" stroke="#f01818" stroke-width="1.2"/><circle cx="13.5" cy="6.4" r=".6" fill="#f01818"/><circle cx="4.3" cy="2.4" r="1.9" fill="#d2ecfa" stroke="#2d5a86" stroke-width="1.2"/><circle cx="21" cy="2.4" r="1.9" fill="#d2ecfa" stroke="#2d5a86" stroke-width="1.2"/><circle cx="13.2" cy="10.7" r="1.9" fill="#d2ecfa" stroke="#5a9ad8" stroke-width="1.2"/><circle cx="4.3" cy="21" r="1.9" fill="#d2ecfa" stroke="#2d5a86" stroke-width="1.2"/><rect x="14" y="14" width="10" height="10" rx="2" fill="#5b8f5b"/><path d="M19.0 16.0V22.0M16.0 19.0H22.0" stroke="#fff" stroke-width="2.10"/></svg>
<svg class="a" style="left:1065.0px;top:131.0px" width="24.0" height="24.0" viewBox="0 0 24 24"><polyline points="2.3,14.6 7.6,2.4" fill="none" stroke="#f01818" stroke-width="1.1"/><polyline points="7.6,2.4 21.4,10.7" fill="none" stroke="#2d5a86" stroke-width="1.1"/><polyline points="2.3,14.6 4.4,21" fill="none" stroke="#2d5a86" stroke-width="1.1"/><circle cx="7.6" cy="2.4" r="1.9" fill="#d2ecfa" stroke="#f01818" stroke-width="1.2"/><circle cx="21.4" cy="10.7" r="1.9" fill="#d2ecfa" stroke="#2d5a86" stroke-width="1.2"/><circle cx="2.3" cy="14.6" r="1.9" fill="#d2ecfa" stroke="#f01818" stroke-width="1.2"/><circle cx="4.4" cy="21" r="1.9" fill="#d2ecfa" stroke="#2d5a86" stroke-width="1.2"/><rect x="13" y="14" width="10" height="10" rx="2" fill="#f6d51a"/><text x="18.0" y="22.7" font-size="9" font-weight="bold" text-anchor="middle" fill="#a9a9a9" font-family="Liberation Sans">S</text></svg>
<svg class="a" style="left:1099.5px;top:131.0px" width="24.0" height="24.0" viewBox="0 0 24 24"><polyline points="5.3,2.4 22,10" fill="none" stroke="#5a9ad8" stroke-width="1.1"/><polyline points="2.9,10 8.2,14.2" fill="none" stroke="#5a9ad8" stroke-width="1.1"/><polyline points="2.9,21.4 16.3,2.4" fill="none" stroke="#2d5a86" stroke-width="1.1"/><circle cx="5.3" cy="2.4" r="1.9" fill="#d2ecfa" stroke="#5a9ad8" stroke-width="1.2"/><circle cx="16.3" cy="2.4" r="1.9" fill="#d2ecfa" stroke="#2d5a86" stroke-width="1.2"/><circle cx="2.9" cy="10" r="1.9" fill="#d2ecfa" stroke="#5a9ad8" stroke-width="1.2"/><circle cx="22" cy="10" r="1.9" fill="#d2ecfa" stroke="#5a9ad8" stroke-width="1.2"/><circle cx="2.9" cy="21.4" r="1.9" fill="#d2ecfa" stroke="#2d5a86" stroke-width="1.2"/><rect x="14" y="14" width="10" height="10" rx="2" fill="#5b8f5b"/><path d="M19.0 16.0V22.0M16.0 19.0H22.0" stroke="#fff" stroke-width="2.10"/></svg>
<svg class="a" style="left:1137.0px;top:131.0px" width="24.0" height="24.0" viewBox="0 0 24 24"><circle cx="2.7" cy="5.1" r="1.9" fill="#d2ecfa" stroke="#2d5a86" stroke-width="1.2"/><circle cx="11.2" cy="2.4" r="1.9" fill="#d2ecfa" stroke="#f01818" stroke-width="1.2"/><circle cx="21.4" cy="2.4" r="1.9" fill="#d2ecfa" stroke="#2d5a86" stroke-width="1.2"/><circle cx="6.2" cy="12.2" r="1.9" fill="#d2ecfa" stroke="#2d5a86" stroke-width="1.2"/><circle cx="14.6" cy="10" r="1.9" fill="#d2ecfa" stroke="#f01818" stroke-width="1.2"/><circle cx="4.8" cy="20.5" r="1.9" fill="#d2ecfa" stroke="#2d5a86" stroke-width="1.2"/><rect x="14" y="14" width="10" height="10" rx="2" fill="#f6d51a"/><text x="19.0" y="22.7" font-size="9" font-weight="bold" text-anchor="middle" fill="#a9a9a9" font-family="Liberation Sans">S</text></svg>
<svg class="a" style="left:1171.5px;top:131.0px" width="24.0" height="24.0" viewBox="0 0 24 24"><polyline points="13.7,2.4 7.7,5.4 10.5,11.5 3.8,15" fill="none" stroke="#5a9ad8" stroke-width="1.1"/><polyline points="3.8,15 6.6,21.4" fill="none" stroke="#2d5a86" stroke-width="1.1"/><circle cx="13.7" cy="2.4" r="1.9" fill="#d2ecfa" stroke="#2d5a86" stroke-width="1.2"/><circle cx="7.7" cy="5.4" r="1.9" fill="#d2ecfa" stroke="#5a9ad8" stroke-width="1.2"/><circle cx="10.5" cy="11.5" r="1.9" fill="#d2ecfa" stroke="#5a9ad8" stroke-width="1.2"/><circle cx="3.8" cy="15" r="1.9" fill="#d2ecfa" stroke="#5a9ad8" stroke-width="1.2"/><circle cx="6.6" cy="21.4" r="1.9" fill="#d2ecfa" stroke="#2d5a86" stroke-width="1.2"/><rect x="14" y="14" width="10" height="10" rx="2" fill="#5b8f5b"/><path d="M19.0 16.0V22.0M16.0 19.0H22.0" stroke="#fff" stroke-width="2.10"/></svg>
<svg class="a" style="left:1211.5px;top:131.0px" width="24.0" height="24.0" viewBox="0 0 24 24"><circle cx="2.7" cy="5.1" r="1.9" fill="#d2ecfa" stroke="#2d5a86" stroke-width="1.2"/><circle cx="11.2" cy="2.4" r="1.9" fill="#d2ecfa" stroke="#f01818" stroke-width="1.2"/><circle cx="21.4" cy="2.4" r="1.9" fill="#d2ecfa" stroke="#2d5a86" stroke-width="1.2"/><circle cx="6.2" cy="12.2" r="1.9" fill="#d2ecfa" stroke="#2d5a86" stroke-width="1.2"/><circle cx="14.6" cy="10" r="1.9" fill="#d2ecfa" stroke="#f01818" stroke-width="1.2"/><circle cx="4.8" cy="20.5" r="1.9" fill="#d2ecfa" stroke="#2d5a86" stroke-width="1.2"/><rect x="14" y="14" width="10" height="10" rx="2" fill="#f6d51a"/><text x="19.0" y="22.7" font-size="9" font-weight="bold" text-anchor="middle" fill="#a9a9a9" font-family="Liberation Sans">S</text></svg>
<svg class="a" style="left:1245.5px;top:131.0px" width="24.0" height="24.0" viewBox="0 0 24 24"><polyline points="3.2,0.5 3.2,21.4" fill="none" stroke="#5a9ad8" stroke-width="1.1"/><polyline points="3.2,21.4 19.2,8.5" fill="none" stroke="#2d5a86" stroke-width="1.1"/><text x="4.3" y="7.2" font-size="8.5" font-weight="bold" fill="#f01818" font-family="Liberation Sans">Az</text><path d="M3.6 9.4L13.5 12.4M10.5 10.3L13.7 12.5L10.8 14" fill="none" stroke="#f01818" stroke-width="1.3"/><circle cx="3.2" cy="21.4" r="1.9" fill="#d2ecfa" stroke="#2d5a86" stroke-width="1.2"/><circle cx="19.2" cy="8.5" r="1.9" fill="#d2ecfa" stroke="#2d5a86" stroke-width="1.2"/><rect x="14.5" y="14" width="10" height="10" rx="2" fill="#5b8f5b"/><text x="19.5" y="22.7" font-size="8" font-weight="bold" text-anchor="middle" fill="#fff" font-family="Liberation Sans">?</text></svg>
<svg class="a" style="left:1283.5px;top:131.0px" width="24.0" height="24.0" viewBox="0 0 24 24"><polyline points="3.1,8.6 10.9,2.4" fill="none" stroke="#2d5a86" stroke-width="1.1"/><polyline points="9.5,16.8 21.9,3.1" fill="none" stroke="#f01818" stroke-width="1.1"/><circle cx="3.1" cy="8.6" r="1.9" fill="#d2ecfa" stroke="#2d5a86" stroke-width="1.2"/><circle cx="10.9" cy="2.4" r="1.9" fill="#d2ecfa" stroke="#2d5a86" stroke-width="1.2"/><circle cx="21.9" cy="3.1" r="1.9" fill="#d2ecfa" stroke="#f01818" stroke-width="1.2"/><circle cx="9.5" cy="16.8" r="1.9" fill="#d2ecfa" stroke="#f01818" stroke-width="1.2"/><circle cx="3.5" cy="20.7" r="1.9" fill="#d2ecfa" stroke="#f01818" stroke-width="1.2"/><rect x="14.5" y="14" width="10" height="10" rx="2" fill="#f6d51a"/><text x="19.5" y="22.7" font-size="9" font-weight="bold" text-anchor="middle" fill="#a9a9a9" font-family="Liberation Sans">S</text></svg>
<svg class="a" style="left:1318.5px;top:131.0px" width="24.0" height="24.0" viewBox="0 0 24 24"><polyline points="6,2.4 2.8,21" fill="none" stroke="#2d5a86" stroke-width="1.1"/><polyline points="2.8,21 19.1,8.5" fill="none" stroke="#5a9ad8" stroke-width="1.1"/><path d="M5.7 7.2L14.5 11.1M11.5 9.2L14.7 11.2L12 13" fill="none" stroke="#f01818" stroke-width="1.3"/><circle cx="6" cy="2.4" r="1.9" fill="#d2ecfa" stroke="#2d5a86" stroke-width="1.2"/><circle cx="2.8" cy="21" r="1.9" fill="#d2ecfa" stroke="#5a9ad8" stroke-width="1.2"/><circle cx="19.1" cy="8.5" r="1.9" fill="#d2ecfa" stroke="#5a9ad8" stroke-width="1.2"/><rect x="14.5" y="14" width="10" height="10" rx="2" fill="#5b8f5b"/><path d="M19.5 16.0V22.0M16.5 19.0H22.5" stroke="#fff" stroke-width="2.10"/></svg>
<svg class="a" style="left:1357.0px;top:131.0px" width="24.0" height="24.0" viewBox="0 0 24 24"><polyline points="2.3,14.6 7.6,2.4" fill="none" stroke="#f01818" stroke-width="1.1"/><polyline points="7.6,2.4 21.4,10.7" fill="none" stroke="#2d5a86" stroke-width="1.1"/><polyline points="2.3,14.6 4.4,21" fill="none" stroke="#2d5a86" stroke-width="1.1"/><circle cx="7.6" cy="2.4" r="1.9" fill="#d2ecfa" stroke="#f01818" stroke-width="1.2"/><circle cx="21.4" cy="10.7" r="1.9" fill="#d2ecfa" stroke="#2d5a86" stroke-width="1.2"/><circle cx="2.3" cy="14.6" r="1.9" fill="#d2ecfa" stroke="#f01818" stroke-width="1.2"/><circle cx="4.4" cy="21" r="1.9" fill="#d2ecfa" stroke="#2d5a86" stroke-width="1.2"/><rect x="13" y="14" width="10" height="10" rx="2" fill="#f6d51a"/><text x="18.0" y="22.7" font-size="9" font-weight="bold" text-anchor="middle" fill="#a9a9a9" font-family="Liberation Sans">S</text></svg>
<svg class="a" style="left:1391.5px;top:131.0px" width="24.0" height="24.0" viewBox="0 0 24 24"><polyline points="0.7,17.5 15.6,0.5" fill="none" stroke="#5a9ad8" stroke-width="1.1"/><polyline points="7.5,21.4 22,4.4" fill="none" stroke="#2d5a86" stroke-width="1.1"/><circle cx="7.5" cy="21.4" r="1.9" fill="#d2ecfa" stroke="#2d5a86" stroke-width="1.2"/><circle cx="22" cy="4.4" r="1.9" fill="#d2ecfa" stroke="#2d5a86" stroke-width="1.2"/><rect x="14.5" y="14" width="10" height="10" rx="2" fill="#5b8f5b"/><path d="M19.5 16.0V22.0M16.5 19.0H22.5" stroke="#fff" stroke-width="2.10"/></svg>
<svg class="a" style="left:1431.0px;top:131.0px" width="24.0" height="24.0" viewBox="0 0 24 24"><polyline points="13.7,2.4 20.4,10.6" fill="none" stroke="#2d5a86" stroke-width="1.1"/><polyline points="1.3,14.6 3.4,21.4" fill="none" stroke="#2d5a86" stroke-width="1.1"/><circle cx="1.6" cy="2.4" r="1.9" fill="#d2ecfa" stroke="#f01818" stroke-width="1.2"/><circle cx="13.7" cy="2.4" r="1.9" fill="#d2ecfa" stroke="#f01818" stroke-width="1.2"/><circle cx="20.4" cy="10.6" r="1.9" fill="#d2ecfa" stroke="#2d5a86" stroke-width="1.2"/><circle cx="1.3" cy="14.6" r="1.9" fill="#d2ecfa" stroke="#f01818" stroke-width="1.2"/><circle cx="3.4" cy="21.4" r="1.9" fill="#d2ecfa" stroke="#2d5a86" stroke-width="1.2"/><rect x="12.2" y="14" width="10" height="10" rx="2" fill="#f6d51a"/><text x="17.2" y="22.7" font-size="9" font-weight="bold" text-anchor="middle" fill="#a9a9a9" font-family="Liberation Sans">S</text></svg>
<svg class="a" style="left:1465.5px;top:131.0px" width="24.0" height="24.0" viewBox="0 0 24 24"><path d="M1.8 21.4Q2.5 10 5.4 6.4Q10 2.4 20.9 2.4" fill="none" stroke="#5a9ad8" stroke-width="1.1"/><circle cx="1.8" cy="21.4" r="1.9" fill="#d2ecfa" stroke="#2d5a86" stroke-width="1.2"/><circle cx="5.4" cy="6.4" r="1.9" fill="#d2ecfa" stroke="#2d5a86" stroke-width="1.2"/><circle cx="20.9" cy="2.4" r="1.9" fill="#d2ecfa" stroke="#2d5a86" stroke-width="1.2"/><rect x="13.5" y="14" width="10" height="10" rx="2" fill="#5b8f5b"/><path d="M18.5 16.0V22.0M15.5 19.0H21.5" stroke="#fff" stroke-width="2.10"/></svg>
<svg class="a" style="left:1502.5px;top:131.0px" width="24.0" height="24.0" viewBox="0 0 24 24"><path d="M3.5 20.7Q0 12 4.9 4Q12 -2 21.9 4.4" fill="none" stroke="#9a9a9a" stroke-width="1"/><path d="M3.5 20.7Q5 12 9.9 9Q14 6 21.9 4.4" fill="none" stroke="#9a9a9a" stroke-width="0.9"/><circle cx="3.5" cy="20.7" r="1.9" fill="#eee" stroke="#9a9a9a" stroke-width="1.1"/><circle cx="4.9" cy="4" r="1.9" fill="#eee" stroke="#9a9a9a" stroke-width="1.1"/><circle cx="21.9" cy="4.4" r="1.9" fill="#eee" stroke="#9a9a9a" stroke-width="1.1"/><circle cx="9.9" cy="9" r="1.9" fill="#eee" stroke="#9a9a9a" stroke-width="1.1"/><rect x="14.5" y="14" width="10" height="10" rx="2" fill="#ababab"/><text x="19.5" y="22.6" font-size="9" font-weight="bold" text-anchor="middle" fill="#fff" font-family="Liberation Sans">M</text></svg>
<svg class="a" style="left:1541.0px;top:131.0px" width="24.0" height="24.0" viewBox="0 0 24 24"><polyline points="2.6,21.4 4.3,10.7 10.7,2.4" fill="none" stroke="#2d5a86" stroke-width="1.1"/><path d="M10.7 2.4Q16 3 19.9 7.2" fill="none" stroke="#2d5a86" stroke-width="1.1"/><circle cx="2.6" cy="21.4" r="1.9" fill="#d2ecfa" stroke="#2d5a86" stroke-width="1.2"/><circle cx="4.3" cy="10.7" r="1.9" fill="#d2ecfa" stroke="#2d5a86" stroke-width="1.2"/><circle cx="10.7" cy="2.4" r="1.9" fill="#d2ecfa" stroke="#2d5a86" stroke-width="1.2"/><circle cx="19.9" cy="7.2" r="1.9" fill="#d2ecfa" stroke="#2d5a86" stroke-width="1.2"/><rect x="14.2" y="14" width="10" height="10" rx="2" fill="#5b8f5b"/><path d="M19.2 16.0V22.0M16.2 19.0H22.2" stroke="#fff" stroke-width="2.10"/></svg>
<svg class="a" style="left:1578.5px;top:131.0px" width="24.0" height="24.0" viewBox="0 0 24 24"><path d="M2.9 21.4L4.7 10.7Q7 3 9.3 3.3Q11.5 3.5 13.9 9.3Q16 13 18.5 12.5Q20.5 10 21 5.3" fill="none" stroke="#2d5a86" stroke-width="1.1"/><circle cx="2.9" cy="21.4" r="1.9" fill="#d2ecfa" stroke="#2d5a86" stroke-width="1.2"/><circle cx="4.7" cy="10.7" r="1.9" fill="#d2ecfa" stroke="#2d5a86" stroke-width="1.2"/><circle cx="13.9" cy="9.3" r="1.9" fill="#d2ecfa" stroke="#2d5a86" stroke-width="1.2"/><circle cx="21" cy="5.3" r="1.9" fill="#d2ecfa" stroke="#2d5a86" stroke-width="1.2"/><rect x="14.5" y="14" width="10" height="10" rx="2" fill="#5b8f5b"/><path d="M19.5 16.0V22.0M16.5 19.0H22.5" stroke="#fff" stroke-width="2.10"/></svg>
<svg class="a" style="left:1616.5px;top:131.0px" width="24.0" height="24.0" viewBox="0 0 24 24"><polyline points="2.9,2.4 19.9,2.4" fill="none" stroke="#2d5a86" stroke-width="1.1"/><polyline points="2.9,2.4 2.9,12.5 10.4,12.5" fill="none" stroke="#2d5a86" stroke-width="1.1"/><polyline points="10.4,12.5 10.4,22.4" fill="none" stroke="#4a7090" stroke-width="1.3"/><polyline points="19.9,2.4 19.9,11.5 23.5,11.5" fill="none" stroke="#4a7090" stroke-width="1"/><path d="M3.3 8.6Q8.5 8 9 2.9" fill="none" stroke="#f01818" stroke-width="1.2"/><path d="M12.9 2.9Q13 8 18.6 8.6" fill="none" stroke="#f01818" stroke-width="1.2"/><circle cx="6.1" cy="5.1" r=".5" fill="#f01818"/><circle cx="15.3" cy="5.1" r=".5" fill="#f01818"/><circle cx="2.9" cy="2.4" r="1.9" fill="#d2ecfa" stroke="#2d5a86" stroke-width="1.2"/><circle cx="19.9" cy="2.4" r="1.9" fill="#d2ecfa" stroke="#2d5a86" stroke-width="1.2"/><circle cx="2.9" cy="12.5" r="1.9" fill="#d2ecfa" stroke="#2d5a86" stroke-width="1.2"/><circle cx="10.4" cy="12.5" r="1.9" fill="#d2ecfa" stroke="#2d5a86" stroke-width="1.2"/><rect x="14.5" y="14" width="10" height="10" rx="2" fill="#5b8f5b"/><path d="M19.5 16.0V22.0M16.5 19.0H22.5" stroke="#fff" stroke-width="2.10"/></svg>
<svg class="a" style="left:1653.5px;top:131.0px" width="24.0" height="24.0" viewBox="0 0 24 24"><polyline points="3.8,18.5 12.3,2.4 22.9,8.5" fill="none" stroke="#2d5a86" stroke-width="1.1"/><path d="M10.5 6.5Q13 9 16.5 5.8" fill="none" stroke="#f01818" stroke-width="1.2"/><circle cx="12.3" cy="2.4" r="1.9" fill="#d2ecfa" stroke="#2d5a86" stroke-width="1.2"/><circle cx="22.9" cy="8.5" r="1.9" fill="#d2ecfa" stroke="#2d5a86" stroke-width="1.2"/><circle cx="3.8" cy="18.5" r="1.9" fill="#d2ecfa" stroke="#2d5a86" stroke-width="1.2"/><rect x="15.5" y="14" width="10" height="10" rx="2" fill="#5b8f5b"/><path d="M20.5 16.0V22.0M17.5 19.0H23.5" stroke="#fff" stroke-width="2.10"/></svg>
<svg class="a" style="left:1693.0px;top:131.0px" width="24.0" height="24.0" viewBox="0 0 24 24"><defs><linearGradient id="tg" x1="0" y1="0" x2="1" y2="1"><stop offset="0" stop-color="#fafafa"/><stop offset="1" stop-color="#cfcfcf"/></linearGradient></defs><rect x="0.6" y="0.6" width="23" height="22.8" rx="3" fill="#5a5a5a"/><rect x="2.2" y="2.2" width="19.8" height="19.6" rx="1.5" fill="#2a2a2a"/><rect x="3" y="3" width="18.2" height="18" rx="1" fill="url(#tg)"/><path d="M5.5 8.5L10 11.2L5.5 14" fill="none" stroke="#111" stroke-width="1.8"/><path d="M10 17.8H16" stroke="#111" stroke-width="1.4"/></svg>
<svg class="a" style="left:1742.0px;top:131.0px" width="24.0" height="24.0" viewBox="0 0 24 24"><ellipse cx="12" cy="12" rx="7" ry="6" fill="none" stroke="#333" stroke-width="1.1"/><circle cx="5" cy="12" r="2.5" fill="#1a6af0"/><circle cx="19" cy="12" r="2.5" fill="#1a6af0"/></svg>
<svg class="a" style="left:1792.0px;top:131.0px" width="24.0" height="24.0" viewBox="0 0 24 24"><rect x="5" y="5" width="15" height="13" fill="none" stroke="#444" stroke-width="1.1"/><circle cx="5" cy="5" r="2.5" fill="#1a6af0"/><circle cx="20" cy="5" r="2.5" fill="#1a6af0"/><circle cx="5" cy="18" r="2.5" fill="#1a6af0"/></svg>
<svg class="a" style="left:1842.0px;top:131.0px" width="24.0" height="24.0" viewBox="0 0 24 24"><ellipse cx="12" cy="13" rx="9" ry="7" fill="none" stroke="#222" stroke-width="1.1"/><circle cx="12" cy="5" r="2.5" fill="#1a6af0"/><circle cx="12" cy="13" r="2.5" fill="#1a6af0"/><circle cx="19" cy="13" r="2.5" fill="#1a6af0"/></svg>
<svg class="a" style="left:1884.5px;top:131.0px" width="24.0" height="24.0" viewBox="0 0 24 24"><path d="M8 9L11 12L8 15M12 9L15 12L12 15" fill="none" stroke="#000" stroke-width="1.6"/></svg>
<div class="a" style="left:691px;top:128px;width:1px;height:30px;background:#a8a8a8"></div><div class="a" style="left:692px;top:128px;width:1px;height:30px;background:#fff"></div>
<div class="a" style="left:911px;top:128px;width:1px;height:30px;background:#a8a8a8"></div><div class="a" style="left:912px;top:128px;width:1px;height:30px;background:#fff"></div>
<div class="a" style="left:984px;top:128px;width:1px;height:30px;background:#a8a8a8"></div><div class="a" style="left:985px;top:128px;width:1px;height:30px;background:#fff"></div>
<div class="a" style="left:1057px;top:128px;width:1px;height:30px;background:#a8a8a8"></div><div class="a" style="left:1058px;top:128px;width:1px;height:30px;background:#fff"></div>
<div class="a" style="left:1130px;top:128px;width:1px;height:30px;background:#a8a8a8"></div><div class="a" style="left:1131px;top:128px;width:1px;height:30px;background:#fff"></div>
<div class="a" style="left:1203px;top:128px;width:1px;height:30px;background:#a8a8a8"></div><div class="a" style="left:1204px;top:128px;width:1px;height:30px;background:#fff"></div>
<div class="a" style="left:1276px;top:128px;width:1px;height:30px;background:#a8a8a8"></div><div class="a" style="left:1277px;top:128px;width:1px;height:30px;background:#fff"></div>
<div class="a" style="left:1349px;top:128px;width:1px;height:30px;background:#a8a8a8"></div><div class="a" style="left:1350px;top:128px;width:1px;height:30px;background:#fff"></div>
<div class="a" style="left:1422px;top:128px;width:1px;height:30px;background:#a8a8a8"></div><div class="a" style="left:1423px;top:128px;width:1px;height:30px;background:#fff"></div>
<div class="a" style="left:1495px;top:128px;width:1px;height:30px;background:#a8a8a8"></div><div class="a" style="left:1496px;top:128px;width:1px;height:30px;background:#fff"></div>
<div class="a" style="left:1533px;top:128px;width:1px;height:30px;background:#a8a8a8"></div><div class="a" style="left:1534px;top:128px;width:1px;height:30px;background:#fff"></div>
<div class="a" style="left:1571px;top:128px;width:1px;height:30px;background:#a8a8a8"></div><div class="a" style="left:1572px;top:128px;width:1px;height:30px;background:#fff"></div>
<div class="a" style="left:1609px;top:128px;width:1px;height:30px;background:#a8a8a8"></div><div class="a" style="left:1610px;top:128px;width:1px;height:30px;background:#fff"></div>
<div class="a" style="left:1647px;top:128px;width:1px;height:30px;background:#a8a8a8"></div><div class="a" style="left:1648px;top:128px;width:1px;height:30px;background:#fff"></div>
<div class="a" style="left:1685px;top:128px;width:1px;height:30px;background:#a8a8a8"></div><div class="a" style="left:1686px;top:128px;width:1px;height:30px;background:#fff"></div>
<div class="a" style="left:1784px;top:128px;width:1px;height:30px;background:#a8a8a8"></div><div class="a" style="left:1785px;top:128px;width:1px;height:30px;background:#fff"></div>
<div class="a" style="left:1834px;top:128px;width:1px;height:30px;background:#a8a8a8"></div><div class="a" style="left:1835px;top:128px;width:1px;height:30px;background:#fff"></div>
<div class="a" style="left:1884px;top:128px;width:1px;height:30px;background:#a8a8a8"></div><div class="a" style="left:1885px;top:128px;width:1px;height:30px;background:#fff"></div>
<svg class="a" style="left:1771.5px;top:140.0px" width="9" height="5"><path d="M0 0h9l-4.5 5z" fill="#000"/></svg>
<svg class="a" style="left:1821.5px;top:140.0px" width="9" height="5"><path d="M0 0h9l-4.5 5z" fill="#000"/></svg>
<svg class="a" style="left:1871.5px;top:140.0px" width="9" height="5"><path d="M0 0h9l-4.5 5z" fill="#000"/></svg>
<div class="a" style="left:51px;top:163px;width:1px;height:846px;background:#b4b4b4"></div><div class="a" style="left:52px;top:163px;width:1px;height:846px;background:#fff"></div>
<svg class="a" style="left:5px;top:169px" width="43" height="6"><rect width="43" height="6" fill="url(#grip)"/></svg>
<svg class="a" style="left:13.5px;top:177.0px" width="24.0" height="24.0" viewBox="0 0 24 24"><path d="M3 3.5L9.5 17.5L15 3.5H20.5" fill="none" stroke="#2b4a6e" stroke-width="1.3"/><circle cx="3" cy="3.5" r="1.6" fill="#fff" stroke="#2b4a6e" stroke-width="1"/><circle cx="9.5" cy="17.5" r="1.6" fill="#fff" stroke="#2b4a6e" stroke-width="1"/><circle cx="15" cy="3.5" r="1.6" fill="#fff" stroke="#2b4a6e" stroke-width="1"/><circle cx="20.5" cy="3.5" r="1.6" fill="#fff" stroke="#2b4a6e" stroke-width="1"/><rect x="14" y="14" width="10" height="10" rx="2" fill="#5b8f5b"/><path d="M19.0 16.0V22.0M16.0 19.0H22.0" stroke="#fff" stroke-width="2.10"/></svg>
<svg class="a" style="left:13.5px;top:211.0px" width="24.0" height="24.0" viewBox="0 0 24 24"><rect x="2.0" y="1.5" width="6.5" height="6.5" fill="#1e3a5e"/><rect x="8.5" y="1.5" width="6.5" height="6.5" fill="#6a9ad0"/><rect x="15.0" y="1.5" width="6.5" height="6.5" fill="#1e3a5e"/><rect x="2.0" y="8.0" width="6.5" height="6.5" fill="#6a9ad0"/><rect x="8.5" y="8.0" width="6.5" height="6.5" fill="#1e3a5e"/><rect x="15.0" y="8.0" width="6.5" height="6.5" fill="#6a9ad0"/><rect x="2.0" y="14.5" width="6.5" height="6.5" fill="#1e3a5e"/><rect x="8.5" y="14.5" width="6.5" height="6.5" fill="#6a9ad0"/><rect x="15.0" y="14.5" width="6.5" height="6.5" fill="#6a9ad0"/><rect x="14" y="14" width="10" height="10" rx="2" fill="#5b8f5b"/><path d="M19.0 16.0V22.0M16.0 19.0H22.0" stroke="#fff" stroke-width="2.10"/></svg>
<svg class="a" style="left:13.5px;top:246.0px" width="24.0" height="24.0" viewBox="0 0 24 24"><path d="M5.5 2.5Q2 1 1 4.5Q0.5 9 2.5 12Q4 13 6.5 12.5Q8 13 8.5 14.5V17Q9 19 11 19Q13 19 13.5 17V13.5Q14 12.5 16 12.5H18.5V11H16.5Q18 8 17.8 5Q17 2 14 1.5Q9 0.8 5.5 2.5Z" fill="#6a9ad0" stroke="#2b4a6e" stroke-width="1.2"/><path d="M5.5 2.5Q4.5 8 6.5 12.5M8.5 5Q7.5 10 9 12.5M14.5 4Q12.5 8 14.5 12" fill="none" stroke="#2b4a6e" stroke-width="1"/><rect x="15.5" y="16" width="9" height="9" rx="2" fill="#5b8f5b"/><path d="M20.0 17.8V23.2M17.3 20.5H22.7" stroke="#fff" stroke-width="1.89"/></svg>
<svg class="a" style="left:13.5px;top:280.0px" width="24.0" height="24.0" viewBox="0 0 24 24"><path d="M2 22Q6 10 21 2Q19 12 9 17Q6 19 2 22Z" fill="#6a9ad0" stroke="#2b4a6e" stroke-width=".9"/><path d="M2 22L17 6" stroke="#2b4a6e" stroke-width=".8"/><rect x="14" y="14" width="10" height="10" rx="2" fill="#5b8f5b"/><path d="M19.0 16.0V22.0M16.0 19.0H22.0" stroke="#fff" stroke-width="2.10"/></svg>
<svg class="a" style="left:13.5px;top:314.0px" width="24.0" height="24.0" viewBox="0 0 24 24"><path d="M2 3Q14 3 22 12Q14 16 3 22Q8 12 2 3Z" fill="#6a9ad0" stroke="#2b4a6e" stroke-width="1"/><path d="M8 4Q12 12 8 19M14 6Q16 12 14 16M18 8Q19 12 18 14" fill="none" stroke="#2b4a6e" stroke-width=".8"/><rect x="14" y="14" width="10" height="10" rx="2" fill="#5b8f5b"/><path d="M19.0 16.0V22.0M16.0 19.0H22.0" stroke="#fff" stroke-width="2.10"/></svg>
<svg class="a" style="left:13.5px;top:348.0px" width="24.0" height="24.0" viewBox="0 0 24 24"><rect x="2.5" y="4.5" width="16" height="12" rx="4" fill="#6a9ad0" stroke="#2b4a6e" stroke-width="1.6"/><rect x="14" y="14" width="10" height="10" rx="2" fill="#5b8f5b"/><path d="M19.0 16.0V22.0M16.0 19.0H22.0" stroke="#fff" stroke-width="2.10"/></svg>
<svg class="a" style="left:13.5px;top:382.0px" width="24.0" height="24.0" viewBox="0 0 24 24"><defs><radialGradient id="glg" cx=".4" cy=".35" r=".7"><stop offset="0" stop-color="#d8e8f8"/><stop offset=".6" stop-color="#8ab4e0"/><stop offset="1" stop-color="#4a7ab8"/></radialGradient></defs><circle cx="11" cy="10.5" r="10" fill="url(#glg)" stroke="#5a8ac0" stroke-width=".8"/><path d="M1 10.5H21M11 .5V20.5M2.5 5.5H19.5M2.5 15.5H19.5" stroke="#4a7ab8" stroke-width=".6"/><ellipse cx="11" cy="10.5" rx="5" ry="10" fill="none" stroke="#4a7ab8" stroke-width=".6"/><path d="M4 5Q7 3 9 5L8.5 8L10 11L8 12L6 9L4 8Z M12 3.5H17L18 6L15 8L13 7Z M10 13L14 12L15 15L12 18L11 16Z M16 10L19 11L18 13Z" fill="#2b4a6e"/><rect x="14.5" y="14" width="9.5" height="9.5" rx="2" fill="#5b8f5b"/><path d="M19.25 15.9V21.6M16.4 18.75H22.1" stroke="#fff" stroke-width="1.99"/></svg>
<svg class="a" style="left:13.5px;top:416.0px" width="24.0" height="24.0" viewBox="0 0 24 24"><circle cx="11" cy="10.5" r="10" fill="#2b4a6e"/><path d="M1.5 7.5H20.5M1.5 13.5H20.5" stroke="#8ab4e0" stroke-width="2.4"/><ellipse cx="11" cy="10.5" rx="4.5" ry="10" fill="none" stroke="#8ab4e0" stroke-width="1.8"/><circle cx="11" cy="10.5" r="10" fill="none" stroke="#1a2a40" stroke-width="1"/><rect x="14.5" y="14" width="9.5" height="9.5" rx="2" fill="#5b8f5b"/><path d="M19.25 15.9V21.6M16.4 18.75H22.1" stroke="#fff" stroke-width="1.99"/></svg>
<svg class="a" style="left:13.5px;top:449.0px" width="24.0" height="24.0" viewBox="0 0 24 24"><defs><radialGradient id="glg" cx=".4" cy=".35" r=".7"><stop offset="0" stop-color="#d8e8f8"/><stop offset=".6" stop-color="#8ab4e0"/><stop offset="1" stop-color="#4a7ab8"/></radialGradient></defs><circle cx="11" cy="10.5" r="10" fill="url(#glg)" stroke="#5a8ac0" stroke-width=".8"/><path d="M1 10.5H21M11 .5V20.5M2.5 5.5H19.5M2.5 15.5H19.5" stroke="#4a7ab8" stroke-width=".6"/><ellipse cx="11" cy="10.5" rx="5" ry="10" fill="none" stroke="#4a7ab8" stroke-width=".6"/><path d="M4.5 5L9.5 16L14 4.5H18" fill="none" stroke="#222" stroke-width="1.1"/><circle cx="4.5" cy="5" r="1.6" fill="#fff" stroke="#222" stroke-width="1"/><circle cx="9.5" cy="16" r="1.6" fill="#fff" stroke="#222" stroke-width="1"/><circle cx="14" cy="4.5" r="1.6" fill="#fff" stroke="#222" stroke-width="1"/><circle cx="18" cy="4.5" r="1.6" fill="#fff" stroke="#222" stroke-width="1"/><rect x="14.5" y="14" width="9.5" height="9.5" rx="2" fill="#5b8f5b"/><path d="M19.25 15.9V21.6M16.4 18.75H22.1" stroke="#fff" stroke-width="1.99"/></svg>
<svg class="a" style="left:13.5px;top:482.0px" width="24.0" height="24.0" viewBox="0 0 24 24"><path d="M9 3Q16 2 15 9Q14 15 7 21L5.5 20Q10 15 9.5 12Q5 12 5 8Q5 3 9 3Z" fill="#6a9ad0" stroke="#2b4a6e" stroke-width=".5"/><rect x="14" y="14" width="10" height="10" rx="2" fill="#5b8f5b"/><path d="M19.0 16.0V22.0M16.0 19.0H22.0" stroke="#fff" stroke-width="2.10"/></svg>
<svg class="a" style="left:13.5px;top:517.0px" width="24.0" height="24.0" viewBox="0 0 24 24"><path d="M3 3.5L9.5 17.5L15 3.5H20.5" fill="none" stroke="#2b4a6e" stroke-width="1.3"/><circle cx="3" cy="3.5" r="1.6" fill="#fff" stroke="#2b4a6e" stroke-width="1"/><circle cx="9.5" cy="17.5" r="1.6" fill="#fff" stroke="#2b4a6e" stroke-width="1"/><circle cx="15" cy="3.5" r="1.6" fill="#fff" stroke="#2b4a6e" stroke-width="1"/><circle cx="20.5" cy="3.5" r="1.6" fill="#fff" stroke="#2b4a6e" stroke-width="1"/><rect x="13.5" y="14.5" width="9.5" height="9.5" rx="1.5" fill="#c8a417"/><path d="M18.25 16.25V22.25M15.65 17.75L20.85 20.75M15.65 20.75L20.85 17.75" stroke="#fff" stroke-width="1.3"/><circle cx="18.25" cy="19.25" r="1.3" fill="#c8a417" stroke="#fff" stroke-width=".8"/></svg>
<svg class="a" style="left:38.0px;top:527.5px" width="9" height="5"><path d="M0 0h9l-4.5 5z" fill="#000"/></svg>
<svg class="a" style="left:5px;top:557px" width="43" height="6"><rect width="43" height="6" fill="url(#grip)"/></svg>
<svg class="a" style="left:13.5px;top:569.0px" width="24.0" height="24.0" viewBox="0 0 24 24"><path d="M12 1V23M1 12H23" stroke="#333" stroke-width="1"/><circle cx="12" cy="12" r="4" fill="none" stroke="#c03030" stroke-width="1.2" stroke-dasharray="2,1.5"/></svg>
<svg class="a" style="left:13.5px;top:601.0px" width="24.0" height="24.0" viewBox="0 0 24 24"><rect x="2.5" y="2.5" width="19" height="20" rx="1" fill="#1ea0f0" stroke="#2a3a4a"/><path d="M1.5 13L10 12L16 3M10 12L21 22" fill="none" stroke="#111" stroke-width="1.1"/><circle cx="1.8" cy="13" r="1.5" fill="#fff" stroke="#333" stroke-width=".7"/><circle cx="10" cy="12" r="1.5" fill="#fff" stroke="#333" stroke-width=".7"/><circle cx="16" cy="3" r="1.5" fill="#fff" stroke="#333" stroke-width=".7"/><circle cx="21" cy="22" r="1.5" fill="#fff" stroke="#333" stroke-width=".7"/></svg>
<svg class="a" style="left:13.5px;top:634.0px" width="24.0" height="24.0" viewBox="0 0 24 24"><path d="M5 13L9 16L14 12M9 16L7 20M9 16L13 19M9 16L11 8L18 6" stroke="#111" stroke-width="1.2" fill="none"/><circle cx="4" cy="12" r="3" fill="#8a1414"/><circle cx="7" cy="20" r="3" fill="#8a1414"/><circle cx="13" cy="19" r="3" fill="#8a1414"/><circle cx="11" cy="8" r="3" fill="#8a1414"/><circle cx="18" cy="6" r="3" fill="#8a1414"/><path d="M20 10V17M16.5 13.5H23.5" stroke="#1a8a1a" stroke-width="1.8"/></svg>
<svg class="a" style="left:13.5px;top:668.0px" width="24.0" height="24.0" viewBox="0 0 24 24"><rect x="1.5" y="4.5" width="21" height="17" fill="#fff" stroke="#3a6ad0"/><rect x="2" y="5" width="20" height="3" fill="#d8e4f8"/><path d="M4 11H8M4 14H8M4 17H8" stroke="#e05050" stroke-width="1"/><path d="M10 11H20M10 14H20M10 17H20" stroke="#999" stroke-width="1"/><path d="M4 20L20 4" stroke="#a86a10" stroke-width="4.5" stroke-linecap="round"/><path d="M4.5 19.5L19.5 4.5" stroke="#f0b040" stroke-width="3" stroke-linecap="round"/></svg>
<svg class="a" style="left:55px;top:169px" width="106" height="6"><rect width="106" height="6" fill="url(#grip)"/></svg>
<div class="t" style="left:165.7px;top:167.6px;font-size:9.3px;">Browser</div>
<svg class="a" style="left:205px;top:169px" width="106" height="6"><rect width="106" height="6" fill="url(#grip)"/></svg>
<div class="dbtn" style="left:312px;top:165px"></div>
<div class="dbtn" style="left:327px;top:165px"></div>
<svg class="a" style="left:312px;top:165px" width="14" height="14"><path d="M5.5 3.5h5v5h-1.5M3.5 6.5h5v4.5h-5z" fill="none" stroke="#000" stroke-width="1.6"/></svg>
<svg class="a" style="left:327px;top:165px" width="14" height="14"><path d="M3.5 3.5l7 7M10.5 3.5l-7 7" stroke="#000" stroke-width="1.5"/></svg>
<svg class="a" style="left:57px;top:187px" width="16" height="16" viewBox="0 0 16 16"><path d="M2 7A6 5.5 0 0 1 13 3.5L14.5 1.5V7.5H8.5L11 5.5A3.5 3 0 0 0 5 7Z" fill="#4a86c8"/><path d="M14 9A6 5.5 0 0 1 3 12.5L1.5 14.5V8.5H7.5L5 10.5A3.5 3 0 0 0 11 9Z" fill="#4a86c8"/></svg>
<svg class="a" style="left:89px;top:187px" width="16" height="16" viewBox="0 0 16 16"><rect x="1" y="1" width="14" height="14" rx="3" fill="#5b8f5b"/><path d="M8 3.5V12.5M3.5 8H12.5" stroke="#fff" stroke-width="2.6"/></svg>
<svg class="a" style="left:121px;top:187px" width="16" height="16" viewBox="0 0 16 16"><path d="M1 2Q8 -0.5 15 2L10 9V15L7 13V9Z" fill="#3cb050" stroke="#2a7a3a" stroke-width=".6"/><ellipse cx="8" cy="2" rx="6.5" ry="1.3" fill="#1e7a30"/></svg>
<svg class="a" style="left:153px;top:187px" width="16" height="16" viewBox="0 0 16 16"><rect x=".5" y=".5" width="15" height="15" fill="#fff" stroke="#3a70d0"/><rect x="1" y="1" width="14" height="2" fill="#3a80e8"/><path d="M4 5V13M4 6H6M4 11H6" stroke="#999" stroke-width=".8"/><rect x="7" y="5" width="3" height="3" fill="#f0a040"/><rect x="7" y="10" width="3" height="3" fill="#f0a040"/><path d="M12.5 14V7M10.5 8.5L12.5 5L14.5 8.5Z" stroke="#e01010" fill="#e01010" stroke-width="1.6"/></svg>
<div class="a" style="left:53px;top:213px;width:289px;height:327px;background:#fff;border:1px solid #adadad;border-radius:2px"></div>
<div class="a" style="left:63px;top:216px;width:1px;height:264px;background:repeating-linear-gradient(to bottom,#a0a0a0 0 1px,transparent 1px 2px)"></div>
<div class="a" style="left:83px;top:360px;width:1px;height:40px;background:repeating-linear-gradient(to bottom,#a0a0a0 0 1px,transparent 1px 2px)"></div>
<div class="a" style="left:83px;top:504px;width:1px;height:33px;background:repeating-linear-gradient(to bottom,#a0a0a0 0 1px,transparent 1px 2px)"></div>
<div class="a" style="left:103px;top:376px;width:1px;height:8px;background:repeating-linear-gradient(to bottom,#a0a0a0 0 1px,transparent 1px 2px)"></div>
<div class="a" style="left:64px;top:224px;width:11px;height:1px;background:repeating-linear-gradient(to right,#a0a0a0 0 1px,transparent 1px 2px)"></div>
<div class="a" style="left:59px;top:220px;width:9px;height:9px;border:1px solid #a0a0a0;background:#fff"></div>
<div class="a" style="left:61px;top:224px;width:5px;height:1px;background:#555"></div>
<div class="a" style="left:63px;top:222px;width:1px;height:5px;background:#444"></div>
<svg class="a" style="left:77.0px;top:216.0px" width="16" height="16" viewBox="0 0 16 16"><defs><linearGradient id="fg1" x1="0" y1="0" x2="1" y2="0"><stop offset="0" stop-color="#fff4b8"/><stop offset="1" stop-color="#e8c450"/></linearGradient></defs><path d="M0.8 0.5H7L8 1.5V15.5H0.8Z" fill="url(#fg1)" stroke="#d4b040" stroke-width=".7"/><path d="M5 1.5H11L12.5 3V15.5H5Z" fill="url(#fg1)" stroke="#d4b040" stroke-width=".7"/><path d="M11.2 9.5V13" stroke="#3a8ad8" stroke-width="1"/></svg>
<div class="t" style="left:98px;top:219.2px;font-size:10.8px;">Home</div>
<div class="a" style="left:64px;top:240px;width:11px;height:1px;background:repeating-linear-gradient(to right,#a0a0a0 0 1px,transparent 1px 2px)"></div>
<svg class="a" style="left:77.0px;top:232.0px" width="16" height="16" viewBox="0 0 16 16"><path d="M8 1L10 6H15L11 9.5L12.5 15L8 12L3.5 15L5 9.5L1 6H6Z" fill="#eaeee2" stroke="#a8ae98" stroke-width=".8"/></svg>
<div class="t" style="left:98px;top:235.2px;font-size:10.8px;">Favourites</div>
<div class="a" style="left:64px;top:256px;width:11px;height:1px;background:repeating-linear-gradient(to right,#a0a0a0 0 1px,transparent 1px 2px)"></div>
<div class="a" style="left:59px;top:252px;width:9px;height:9px;border:1px solid #a0a0a0;background:#fff"></div>
<div class="a" style="left:61px;top:256px;width:5px;height:1px;background:#555"></div>
<div class="a" style="left:63px;top:254px;width:1px;height:5px;background:#444"></div>
<svg class="a" style="left:77.0px;top:248.0px" width="16" height="16" viewBox="0 0 16 16"><defs><linearGradient id="fg1" x1="0" y1="0" x2="1" y2="0"><stop offset="0" stop-color="#fff4b8"/><stop offset="1" stop-color="#e8c450"/></linearGradient></defs><path d="M0.8 0.5H7L8 1.5V15.5H0.8Z" fill="url(#fg1)" stroke="#d4b040" stroke-width=".7"/><path d="M5 1.5H11L12.5 3V15.5H5Z" fill="url(#fg1)" stroke="#d4b040" stroke-width=".7"/><path d="M11.2 9.5V13" stroke="#3a8ad8" stroke-width="1"/></svg>
<div class="t" style="left:98px;top:251.2px;font-size:10.8px;">C:/</div>
<div class="a" style="left:64px;top:272px;width:11px;height:1px;background:repeating-linear-gradient(to right,#a0a0a0 0 1px,transparent 1px 2px)"></div>
<div class="a" style="left:59px;top:268px;width:9px;height:9px;border:1px solid #a0a0a0;background:#fff"></div>
<div class="a" style="left:61px;top:272px;width:5px;height:1px;background:#555"></div>
<div class="a" style="left:63px;top:270px;width:1px;height:5px;background:#444"></div>
<svg class="a" style="left:77.0px;top:264.0px" width="16" height="16" viewBox="0 0 16 16"><defs><linearGradient id="fg1" x1="0" y1="0" x2="1" y2="0"><stop offset="0" stop-color="#fff4b8"/><stop offset="1" stop-color="#e8c450"/></linearGradient></defs><path d="M0.8 0.5H7L8 1.5V15.5H0.8Z" fill="url(#fg1)" stroke="#d4b040" stroke-width=".7"/><path d="M5 1.5H11L12.5 3V15.5H5Z" fill="url(#fg1)" stroke="#d4b040" stroke-width=".7"/><path d="M11.2 9.5V13" stroke="#3a8ad8" stroke-width="1"/></svg>
<div class="t" style="left:98px;top:267.2px;font-size:10.8px;">E:/</div>
<div class="a" style="left:64px;top:288px;width:11px;height:1px;background:repeating-linear-gradient(to right,#a0a0a0 0 1px,transparent 1px 2px)"></div>
<div class="a" style="left:59px;top:284px;width:9px;height:9px;border:1px solid #a0a0a0;background:#fff"></div>
<div class="a" style="left:61px;top:288px;width:5px;height:1px;background:#555"></div>
<div class="a" style="left:63px;top:286px;width:1px;height:5px;background:#444"></div>
<svg class="a" style="left:77.0px;top:280.0px" width="16" height="16" viewBox="0 0 16 16"><defs><linearGradient id="fg1" x1="0" y1="0" x2="1" y2="0"><stop offset="0" stop-color="#fff4b8"/><stop offset="1" stop-color="#e8c450"/></linearGradient></defs><path d="M0.8 0.5H7L8 1.5V15.5H0.8Z" fill="url(#fg1)" stroke="#d4b040" stroke-width=".7"/><path d="M5 1.5H11L12.5 3V15.5H5Z" fill="url(#fg1)" stroke="#d4b040" stroke-width=".7"/><path d="M11.2 9.5V13" stroke="#3a8ad8" stroke-width="1"/></svg>
<div class="t" style="left:98px;top:283.2px;font-size:10.8px;">X:/</div>
<div class="a" style="left:64px;top:304px;width:11px;height:1px;background:repeating-linear-gradient(to right,#a0a0a0 0 1px,transparent 1px 2px)"></div>
<svg class="a" style="left:77.0px;top:296.0px" width="16" height="16" viewBox="0 0 16 16"><path d="M0.5 1Q10 1 15.5 6.5Q9 9 1.5 15Q5 8 0.5 1Z" fill="#6a9ad0" stroke="#2b4a6e" stroke-width=".8"/><path d="M4 2Q6 7 4 12M7.5 3Q9 7 7.5 10.5M11 4.5Q12 7 11 8.5" fill="none" stroke="#2b4a6e" stroke-width=".6"/></svg>
<div class="t" style="left:98px;top:299.2px;font-size:10.8px;">MSSQL</div>
<div class="a" style="left:64px;top:320px;width:11px;height:1px;background:repeating-linear-gradient(to right,#a0a0a0 0 1px,transparent 1px 2px)"></div>
<svg class="a" style="left:77.0px;top:312.0px" width="16" height="16" viewBox="0 0 16 16"><rect x="1" y="3.5" width="15" height="9" rx="4" fill="#6a9ad0" stroke="#2b4a6e" stroke-width="1.1"/></svg>
<div class="t" style="left:98px;top:315.2px;font-size:10.8px;">Oracle</div>
<div class="a" style="left:64px;top:336px;width:11px;height:1px;background:repeating-linear-gradient(to right,#a0a0a0 0 1px,transparent 1px 2px)"></div>
<div class="a" style="left:59px;top:332px;width:9px;height:9px;border:1px solid #a0a0a0;background:#fff"></div>
<div class="a" style="left:61px;top:336px;width:5px;height:1px;background:#555"></div>
<svg class="a" style="left:77.0px;top:328.0px" width="16" height="16" viewBox="0 0 16 16"><g transform="scale(.82)"><path d="M5.5 2.5Q2 1 1 4.5Q0.5 9 2.5 12Q4 13 6.5 12.5Q8 13 8.5 14.5V17Q9 19 11 19Q13 19 13.5 17V13.5Q14 12.5 16 12.5H18.5V11H16.5Q18 8 17.8 5Q17 2 14 1.5Q9 0.8 5.5 2.5Z" fill="#6a9ad0" stroke="#2b4a6e" stroke-width="1.2"/><path d="M5.5 2.5Q4.5 8 6.5 12.5M8.5 5Q7.5 10 9 12.5M14.5 4Q12.5 8 14.5 12" fill="none" stroke="#2b4a6e" stroke-width="1"/></g></svg>
<div class="t" style="left:98px;top:331.2px;font-size:10.8px;">PostGIS</div>
<div class="a" style="left:84px;top:352px;width:11px;height:1px;background:repeating-linear-gradient(to right,#a0a0a0 0 1px,transparent 1px 2px)"></div>
<div class="a" style="left:79px;top:348px;width:9px;height:9px;border:1px solid #a0a0a0;background:#fff"></div>
<div class="a" style="left:81px;top:352px;width:5px;height:1px;background:#555"></div>
<div class="a" style="left:83px;top:350px;width:1px;height:5px;background:#444"></div>
<svg class="a" style="left:99px;top:346px" width="12" height="12" viewBox="0 0 16 16"><path d="M1 8H6M6 8Q8 4 12 4M6 8Q8 12 12 12" fill="none" stroke="#a86a10" stroke-width="1.8"/></svg>
<div class="t" style="left:118.8px;top:347.2px;font-size:10.8px;">[bpd_owner] gisdb</div>
<div class="a" style="left:84px;top:368px;width:11px;height:1px;background:repeating-linear-gradient(to right,#a0a0a0 0 1px,transparent 1px 2px)"></div>
<div class="a" style="left:79px;top:364px;width:9px;height:9px;border:1px solid #a0a0a0;background:#fff"></div>
<div class="a" style="left:81px;top:368px;width:5px;height:1px;background:#555"></div>
<svg class="a" style="left:99px;top:362px" width="12" height="12" viewBox="0 0 16 16"><path d="M1 8H6M6 8Q8 4 12 4M6 8Q8 12 12 12" fill="none" stroke="#a86a10" stroke-width="1.8"/></svg>
<div class="t" style="left:118.8px;top:363.2px;font-size:10.8px;">gis</div>
<div class="a" style="left:104px;top:384px;width:11px;height:1px;background:repeating-linear-gradient(to right,#a0a0a0 0 1px,transparent 1px 2px)"></div>
<svg class="a" style="left:117.5px;top:376.5px" width="15" height="15" viewBox="0 0 16 16"><circle cx="8" cy="8" r="7.2" fill="#a01818" stroke="#701010" stroke-width=".8"/><path d="M5 4.5L11 11.5M11 4.5L5 11.5" stroke="#fff" stroke-width="1.3"/></svg>
<div class="t" style="left:138.4px;top:379.2px;font-size:10.8px;">Connection failed</div>
<div class="a" style="left:84px;top:400px;width:11px;height:1px;background:repeating-linear-gradient(to right,#a0a0a0 0 1px,transparent 1px 2px)"></div>
<div class="a" style="left:79px;top:396px;width:9px;height:9px;border:1px solid #a0a0a0;background:#fff"></div>
<div class="a" style="left:81px;top:400px;width:5px;height:1px;background:#555"></div>
<div class="a" style="left:83px;top:398px;width:1px;height:5px;background:#444"></div>
<svg class="a" style="left:99px;top:394px" width="12" height="12" viewBox="0 0 16 16"><path d="M1 8H6M6 8Q8 4 12 4M6 8Q8 12 12 12" fill="none" stroke="#a86a10" stroke-width="1.8"/></svg>
<div class="t" style="left:118.8px;top:395.2px;font-size:10.8px;">Mars</div>
<div class="a" style="left:64px;top:416px;width:11px;height:1px;background:repeating-linear-gradient(to right,#a0a0a0 0 1px,transparent 1px 2px)"></div>
<svg class="a" style="left:77.0px;top:408.0px" width="16" height="16" viewBox="0 0 16 16"><path d="M1 15Q4 6 15 1Q14 9 7 12Q4 13 1 15Z" fill="#6a9ad0" stroke="#2b4a6e" stroke-width=".7"/></svg>
<div class="t" style="left:98px;top:411.2px;font-size:10.8px;">SpatiaLite</div>
<div class="a" style="left:64px;top:432px;width:11px;height:1px;background:repeating-linear-gradient(to right,#a0a0a0 0 1px,transparent 1px 2px)"></div>
<div class="a" style="left:59px;top:428px;width:9px;height:9px;border:1px solid #a0a0a0;background:#fff"></div>
<div class="a" style="left:61px;top:432px;width:5px;height:1px;background:#555"></div>
<div class="a" style="left:63px;top:430px;width:1px;height:5px;background:#444"></div>
<svg class="a" style="left:77.0px;top:424.0px" width="16" height="16" viewBox="0 0 16 16"><circle cx="8" cy="8" r="7" fill="#e0ecf8" stroke="#6a9ad0" stroke-width=".8"/><path d="M1 8H15M8 1V15M2 4.5H14M2 11.5H14" stroke="#6a9ad0" stroke-width=".6"/><ellipse cx="8" cy="8" rx="3.5" ry="7" fill="none" stroke="#6a9ad0" stroke-width=".6"/></svg>
<div class="t" style="left:98px;top:427.2px;font-size:10.8px;">OWS</div>
<div class="a" style="left:64px;top:448px;width:11px;height:1px;background:repeating-linear-gradient(to right,#a0a0a0 0 1px,transparent 1px 2px)"></div>
<svg class="a" style="left:77.0px;top:440.0px" width="16" height="16" viewBox="0 0 16 16"><circle cx="8" cy="8" r="7" fill="#2b4a6e"/><path d="M1 5.5H15M1 10.5H15" stroke="#a8c8ec" stroke-width="1.6"/><ellipse cx="8" cy="8" rx="3" ry="7" fill="none" stroke="#a8c8ec" stroke-width="1.2"/></svg>
<div class="t" style="left:98px;top:443.2px;font-size:10.8px;">WCS</div>
<div class="a" style="left:64px;top:464px;width:11px;height:1px;background:repeating-linear-gradient(to right,#a0a0a0 0 1px,transparent 1px 2px)"></div>
<svg class="a" style="left:77.0px;top:456.0px" width="16" height="16" viewBox="0 0 16 16"><circle cx="8" cy="8" r="7" fill="#e0ecf8" stroke="#6a9ad0" stroke-width=".8"/><path d="M3.5 4L7 13L10 3.5H13" fill="none" stroke="#222" stroke-width=".9"/></svg>
<div class="t" style="left:98px;top:459.2px;font-size:10.8px;">WFS</div>
<div class="a" style="left:64px;top:480px;width:11px;height:1px;background:repeating-linear-gradient(to right,#a0a0a0 0 1px,transparent 1px 2px)"></div>
<div class="a" style="left:59px;top:476px;width:9px;height:9px;border:1px solid #a0a0a0;background:#fff"></div>
<div class="a" style="left:61px;top:480px;width:5px;height:1px;background:#555"></div>
<svg class="a" style="left:77.0px;top:472.0px" width="16" height="16" viewBox="0 0 16 16"><circle cx="8" cy="8" r="7" fill="#6a9ad0" stroke="#2b4a6e" stroke-width=".8"/><path d="M4 4Q6 3 7 5L6 7L4 6Z M9 3H13L12 6L10 6Z M7 9L10 8L9 13L8 12Z" fill="#2b4a6e"/></svg>
<div class="t" style="left:98px;top:475.2px;font-size:10.8px;">WMS</div>
<div class="a" style="left:84px;top:496px;width:11px;height:1px;background:repeating-linear-gradient(to right,#a0a0a0 0 1px,transparent 1px 2px)"></div>
<div class="a" style="left:79px;top:492px;width:9px;height:9px;border:1px solid #a0a0a0;background:#fff"></div>
<div class="a" style="left:81px;top:496px;width:5px;height:1px;background:#555"></div>
<div class="a" style="left:83px;top:494px;width:1px;height:5px;background:#444"></div>
<svg class="a" style="left:99px;top:490px" width="12" height="12" viewBox="0 0 16 16"><path d="M1 8H6M6 8Q8 4 12 4M6 8Q8 12 12 12" fill="none" stroke="#a86a10" stroke-width="1.8"/></svg>
<div class="t" style="left:118.8px;top:491.2px;font-size:10.8px;">[wms] geoserver149</div>
<div class="a" style="left:84px;top:512px;width:11px;height:1px;background:repeating-linear-gradient(to right,#a0a0a0 0 1px,transparent 1px 2px)"></div>
<div class="a" style="left:79px;top:508px;width:9px;height:9px;border:1px solid #a0a0a0;background:#fff"></div>
<div class="a" style="left:81px;top:512px;width:5px;height:1px;background:#555"></div>
<div class="a" style="left:83px;top:510px;width:1px;height:5px;background:#444"></div>
<svg class="a" style="left:99px;top:506px" width="12" height="12" viewBox="0 0 16 16"><path d="M1 8H6M6 8Q8 4 12 4M6 8Q8 12 12 12" fill="none" stroke="#a86a10" stroke-width="1.8"/></svg>
<div class="t" style="left:118.8px;top:507.2px;font-size:10.8px;">[wmts] glorius</div>
<div class="a" style="left:84px;top:528px;width:11px;height:1px;background:repeating-linear-gradient(to right,#a0a0a0 0 1px,transparent 1px 2px)"></div>
<div class="a" style="left:79px;top:524px;width:9px;height:9px;border:1px solid #a0a0a0;background:#fff"></div>
<div class="a" style="left:81px;top:528px;width:5px;height:1px;background:#555"></div>
<div class="a" style="left:83px;top:526px;width:1px;height:5px;background:#444"></div>
<svg class="a" style="left:99px;top:522px" width="12" height="12" viewBox="0 0 16 16"><path d="M1 8H6M6 8Q8 4 12 4M6 8Q8 12 12 12" fill="none" stroke="#a86a10" stroke-width="1.8"/></svg>
<div class="t" style="left:118.8px;top:523.2px;font-size:10.8px;">localhost</div>
<div class="a" style="left:324px;top:214px;width:17px;height:325px;background:#f0f0f0"></div>
<div class="a" style="left:324.5px;top:215.5px;width:15px;height:15px;border:1px solid #9a9a9a;border-radius:3px;background:linear-gradient(to right,#fafafa,#e4e4e4)"></div>
<svg class="a" style="left:328.5px;top:221.0px" width="7" height="4"><path d="M0 4h7l-3.5-4z" fill="#000"/></svg>
<div class="a" style="left:324.5px;top:231px;width:15px;height:261px;border:1px solid #9a9a9a;border-radius:3px;background:linear-gradient(to right,#fafafa,#e4e4e4)"></div>
<svg class="a" style="left:328px;top:353px" width="9" height="18"><rect width="9" height="18" fill="url(#grip)"/></svg>
<div class="a" style="left:325px;top:492px;width:15px;height:14px;background:repeating-conic-gradient(#e8e8e8 0 25%,#fff 0 50%) 0 0/2px 2px"></div>
<div class="a" style="left:324.5px;top:506.5px;width:15px;height:15px;border:1px solid #9a9a9a;border-radius:3px;background:linear-gradient(to right,#fafafa,#e4e4e4)"></div>
<svg class="a" style="left:328.5px;top:512.0px" width="7" height="4"><path d="M0 4h7l-3.5-4z" fill="#000"/></svg>
<div class="a" style="left:324.5px;top:521.5px;width:15px;height:15px;border:1px solid #9a9a9a;border-radius:3px;background:linear-gradient(to right,#fafafa,#e4e4e4)"></div>
<svg class="a" style="left:328.5px;top:527.0px" width="7" height="4"><path d="M0 0h7l-3.5 4z" fill="#000"/></svg>
<svg class="a" style="left:148px;top:540px" width="93" height="6"><rect width="93" height="6" fill="url(#grip)"/></svg>
<svg class="a" style="left:54px;top:551px" width="77" height="6"><rect width="77" height="6" fill="url(#grip)"/></svg>
<div class="t" style="left:141.4px;top:551.6px;font-size:9.3px;">Advanced Digitizing</div>
<svg class="a" style="left:232px;top:551px" width="78" height="6"><rect width="78" height="6" fill="url(#grip)"/></svg>
<div class="dbtn" style="left:312px;top:548.5px"></div>
<div class="dbtn" style="left:327px;top:548.5px"></div>
<svg class="a" style="left:312px;top:548.5px" width="14" height="14"><path d="M5.5 3.5h5v5h-1.5M3.5 6.5h5v4.5h-5z" fill="none" stroke="#000" stroke-width="1.6"/></svg>
<svg class="a" style="left:327px;top:548.5px" width="14" height="14"><path d="M3.5 3.5l7 7M10.5 3.5l-7 7" stroke="#000" stroke-width="1.5"/></svg>
<div class="t" style="left:53px;width:286px;text-align:center;top:575.5px;font-size:11px;line-height:13px">CAD tools are not enabled for the current map tool<br>(Select features)</div>
<svg class="a" style="left:148px;top:621px" width="93" height="6"><rect width="93" height="6" fill="url(#grip)"/></svg>
<svg class="a" style="left:54px;top:631px" width="106" height="6"><rect width="106" height="6" fill="url(#grip)"/></svg>
<div class="t" style="left:168.8px;top:631.4px;font-size:9.3px;">Layers</div>
<svg class="a" style="left:202px;top:631px" width="108" height="6"><rect width="108" height="6" fill="url(#grip)"/></svg>
<div class="dbtn" style="left:312px;top:628.5px"></div>
<div class="dbtn" style="left:327px;top:628.5px"></div>
<svg class="a" style="left:312px;top:628.5px" width="14" height="14"><path d="M5.5 3.5h5v5h-1.5M3.5 6.5h5v4.5h-5z" fill="none" stroke="#000" stroke-width="1.6"/></svg>
<svg class="a" style="left:327px;top:628.5px" width="14" height="14"><path d="M3.5 3.5l7 7M10.5 3.5l-7 7" stroke="#000" stroke-width="1.5"/></svg>
<svg class="a" style="left:61px;top:650px" width="16" height="16" viewBox="0 0 16 16"><path d="M1.5 5.5V15.5H10.5M4.5 2.5H14.5V12.5H4.5Z" fill="#f4f4f4" stroke="#888" stroke-width=".9"/><path d="M9 4V10Q9 12 10.5 12Q12 12 12 10V2Q12 .5 10.8 .5Q9.5 .5 9.5 2V9" fill="none" stroke="#3a6ac0" stroke-width="1"/></svg>
<svg class="a" style="left:94px;top:650px" width="18" height="16" viewBox="0 0 18 16"><path d="M1 7Q9 0 17 7Q9 13 1 7Z" fill="#e8eef4" stroke="#aab" stroke-width=".8"/><circle cx="9" cy="7" r="3" fill="#5a80b0"/><path d="M12 13h6l-3 3z" fill="#000"/></svg>
<svg class="a" style="left:126px;top:650px" width="16" height="16" viewBox="0 0 16 16"><path d="M1 2Q8 -0.5 15 2L10 9V15L7 13V9Z" fill="#3cb050" stroke="#2a7a3a" stroke-width=".6"/><ellipse cx="8" cy="2" rx="6.5" ry="1.3" fill="#1e7a30"/></svg>
<svg class="a" style="left:158px;top:650px" width="16" height="16" viewBox="0 0 16 16"><rect x=".5" y=".5" width="15" height="15" fill="#fff" stroke="#3a70d0"/><rect x="1" y="1" width="14" height="2" fill="#3a80e8"/><path d="M4 5V13M4 6H6M4 11H6" stroke="#999" stroke-width=".8"/><rect x="7" y="5" width="3" height="3" fill="#f0a040"/><rect x="7" y="10" width="3" height="3" fill="#f0a040"/><path d="M12.5 5V12M10.5 10.5L12.5 14L14.5 10.5Z" stroke="#e01010" fill="#e01010" stroke-width="1.6"/></svg>
<svg class="a" style="left:190px;top:650px" width="16" height="16" viewBox="0 0 16 16"><rect x=".5" y=".5" width="15" height="15" fill="#fff" stroke="#3a70d0"/><rect x="1" y="1" width="14" height="2" fill="#3a80e8"/><path d="M4 5V13M4 6H6M4 11H6" stroke="#999" stroke-width=".8"/><rect x="7" y="5" width="3" height="3" fill="#f0a040"/><rect x="7" y="10" width="3" height="3" fill="#f0a040"/><path d="M12.5 14V7M10.5 8.5L12.5 5L14.5 8.5Z" stroke="#e01010" fill="#e01010" stroke-width="1.6"/></svg>
<svg class="a" style="left:222px;top:650px" width="17" height="17" viewBox="0 0 17 17"><rect x=".5" y=".5" width="13" height="13" fill="#f4f4f4" stroke="#aaa"/><rect x="10" y="10" width="6.5" height="5" rx="1" fill="#e84a4a"/><path d="M11.5 12.5H15" stroke="#fff" stroke-width="1.2"/></svg>
<div class="a" style="left:52px;top:677px;width:290px;height:333px;background:#fff;border:2px solid #3d8ee8;border-radius:2px"></div>
<div class="a" style="left:54px;top:679px;width:286px;height:15.5px;background:#3399ff"></div>
<div class="a" style="left:116px;top:679px;width:224px;height:15.5px;border:1px dotted #e0a050"></div>
<div class="a" style="left:64px;top:680px;width:1px;height:22px;background:repeating-linear-gradient(to bottom,#a0a0a0 0 1px,transparent 1px 2px)"></div>
<div class="a" style="left:65px;top:687px;width:10px;height:1px;background:repeating-linear-gradient(to right,#a0a0a0 0 1px,transparent 1px 2px)"></div>
<div class="a" style="left:65px;top:701px;width:10px;height:1px;background:repeating-linear-gradient(to right,#a0a0a0 0 1px,transparent 1px 2px)"></div>
<div class="a" style="left:77px;top:681.5px;width:13px;height:13px;border:1px solid #8f8f8f;background:#fff;border-radius:1px"></div>
<svg class="a" style="left:79px;top:683.5px" width="9" height="9"><path d="M1.5 1.5l6 6M7.5 1.5l-6 6" stroke="#000" stroke-width="2.2"/></svg>
<div class="a" style="left:77px;top:695.5px;width:13px;height:13px;border:1px solid #8f8f8f;background:#fff;border-radius:1px"></div>
<svg class="a" style="left:79px;top:697.5px" width="9" height="9"><path d="M1.5 1.5l6 6M7.5 1.5l-6 6" stroke="#000" stroke-width="2.2"/></svg>
<div class="a" style="left:96px;top:679px;width:16px;height:15px;background:#3a78b8;border:1px solid #2a5a8a"></div>
<svg class="a" style="left:97px;top:680px" width="14" height="14"><path d="M3 13L4 9L11 1L13 3L6 11Z" fill="#c08060" stroke="#5a3a2a" stroke-width=".6"/></svg>
<div class="t" style="left:118px;top:682.5px;font-size:11px;font-weight:bold;color:#fff;text-decoration:underline;letter-spacing:0.45px">simplepoly (simplepoly)</div>
<div class="t" style="left:96px;top:696.5px;font-size:11px;font-weight:bold">OSM TF Landscape</div>
<svg class="a" style="left:344px;top:444px" width="4" height="278"><rect width="4" height="278" fill="url(#grip)"/></svg>
<svg class="a" style="left:870px;top:835px" width="518" height="6"><rect width="518" height="6" fill="url(#grip)"/></svg>
<svg class="a" style="left:352px;top:847px" width="734" height="6"><rect width="734" height="6" fill="url(#grip)"/></svg>
<div class="t" style="left:1091px;top:845.6px;font-size:9.3px;">CAD Console</div>
<svg class="a" style="left:1155px;top:847px" width="731" height="6"><rect width="731" height="6" fill="url(#grip)"/></svg>
<div class="dbtn" style="left:1890px;top:843px;width:14px;height:14px"></div>
<div class="dbtn" style="left:1905px;top:843px;width:14px;height:14px"></div>
<svg class="a" style="left:1890px;top:843px" width="14" height="14"><path d="M5.5 3.5h5v5h-1.5M3.5 6.5h5v4.5h-5z" fill="none" stroke="#000" stroke-width="1.6"/></svg>
<svg class="a" style="left:1905px;top:843px" width="14" height="14"><path d="M3.5 3.5l7 7M10.5 3.5l-7 7" stroke="#000" stroke-width="1.5"/></svg>
<div class="a" style="left:357.5px;top:870px;width:1553px;height:95px;background:#fff;border:1px solid #adadad;border-radius:2px"></div>
<div class="a" style="left:357.5px;top:970px;width:1553px;height:31px;background:#fff;border:1px solid #adadad;border-radius:2px"></div>
<div class="t" style="left:362.5px;top:975px;font-size:11px;line-height:12.5px"><span style="color:#1a8a1a">cad</span>&gt; ortho on<br><span style="color:#1a8a1a">cad</span>&gt;</div>
<div class="a" style="left:1893px;top:971px;width:15px;height:14px;border:1px solid #9a9a9a;border-radius:3px;background:linear-gradient(to right,#fafafa,#e4e4e4)"></div>
<svg class="a" style="left:1897.0px;top:976.0px" width="7" height="4"><path d="M0 4h7l-3.5-4z" fill="#000"/></svg>
<div class="a" style="left:1893px;top:985px;width:15px;height:14px;border:1px solid #9a9a9a;border-radius:3px;background:linear-gradient(to right,#fafafa,#e4e4e4)"></div>
<svg class="a" style="left:1897.0px;top:990.0px" width="7" height="4"><path d="M0 0h7l-3.5 4z" fill="#000"/></svg>
<div class="a" style="left:1007px;top:1015.5px;width:19.5px;height:19px;border:1px solid #8a8a8a;border-radius:3px;background:linear-gradient(#fafafa,#e0e0e0)"></div>
<svg class="a" style="left:1008px;top:1016px" width="18" height="18" viewBox="0 0 18 18"><path d="M5 3Q9 1 12 4L8 9Q5 6 5 3Z" fill="#555"/><circle cx="10" cy="11" r="4" fill="none" stroke="#333" stroke-width="1.8"/><path d="M3 3L15 15M12 3L15 2" stroke="#222" stroke-width="1"/></svg>
<div class="t" style="left:1035.5px;top:1020.0px;font-size:11px;">Coordinate:</div>
<div class="a" style="left:1102.5px;top:1015.5px;width:299.5px;height:19px;background:#fff;border:1px solid #b0b0b0;border-radius:2px"></div>
<div class="t" style="left:1102.5px;width:299.5px;text-align:center;top:1020px;font-size:11px">4182243.6,7510257.8</div>
<div class="t" style="left:1410.5px;top:1020.0px;font-size:11px;">Scale</div>
<div class="a" style="left:1448px;top:1014.5px;width:86.5px;height:20.5px;background:#fff;border:1px solid #b0b0b0;border-radius:2px"></div>
<div class="a" style="left:1518.5px;top:1015.5px;width:15px;height:18.5px;border:1px solid #a0a0a0;border-radius:2px;background:linear-gradient(#fafafa,#e4e4e4)"></div>
<svg class="a" style="left:1521.5px;top:1022.5px" width="9" height="5"><path d="M0 0h9l-4.5 5z" fill="#000"/></svg>
<div class="t" style="left:1452.5px;top:1020.0px;font-size:11px;">1:908</div>
<div class="t" style="left:1543px;top:1020.0px;font-size:11px;">Rotation:</div>
<div class="a" style="left:1598px;top:1014.5px;width:97px;height:21px;background:#fff;border:1px solid #b0b0b0;border-radius:2px"></div>
<div class="a" style="left:1679.5px;top:1015px;width:15px;height:10px;border:1px solid #a8a8a8;border-radius:2px;background:linear-gradient(#fafafa,#e4e4e4)"></div>
<div class="a" style="left:1679.5px;top:1025px;width:15px;height:10px;border:1px solid #a8a8a8;border-radius:2px;background:linear-gradient(#fafafa,#e4e4e4)"></div>
<svg class="a" style="left:1683.5px;top:1018px" width="7" height="4"><path d="M0 4h7l-3.5-4z" fill="#000"/></svg>
<svg class="a" style="left:1683.5px;top:1028px" width="7" height="4"><path d="M0 0h7l-3.5 4z" fill="#000"/></svg>
<div class="t" style="left:1602.5px;top:1020.0px;font-size:11px;">0,0</div>
<div class="a" style="left:1703px;top:1018.5px;width:12px;height:12px;border:1px solid #8f8f8f;background:#fff"></div>
<svg class="a" style="left:1705px;top:1020.5px" width="8" height="8"><path d="M1 1l6 6M7 1l-6 6" stroke="#000" stroke-width="2.6"/></svg>
<div class="t" style="left:1718.5px;top:1020.0px;font-size:11px;">Render</div>
<svg class="a" style="left:1772px;top:1017px" width="16" height="16" viewBox="0 0 16 16"><circle cx="8" cy="8" r="7" fill="#fff" stroke="#333" stroke-width="1.3"/><ellipse cx="8" cy="8" rx="3" ry="7" fill="none" stroke="#333" stroke-width="1.1"/><path d="M1 8H15M2 4.5H14M2 11.5H14" stroke="#333" stroke-width="1"/></svg>
<div class="t" style="left:1792px;top:1020.7px;font-size:10.3px;">EPSG:3857 (OTF)</div>
<svg class="a" style="left:1897px;top:1017px" width="18" height="16" viewBox="0 0 18 16"><path d="M9 2C4 2 1 5 1 8C1 10.5 3 12.5 6 13L4 15.5L9 13.5C14 13.5 17 11 17 8C17 5 14 2 9 2Z" fill="#6a6a6a"/></svg>
</body></html>
